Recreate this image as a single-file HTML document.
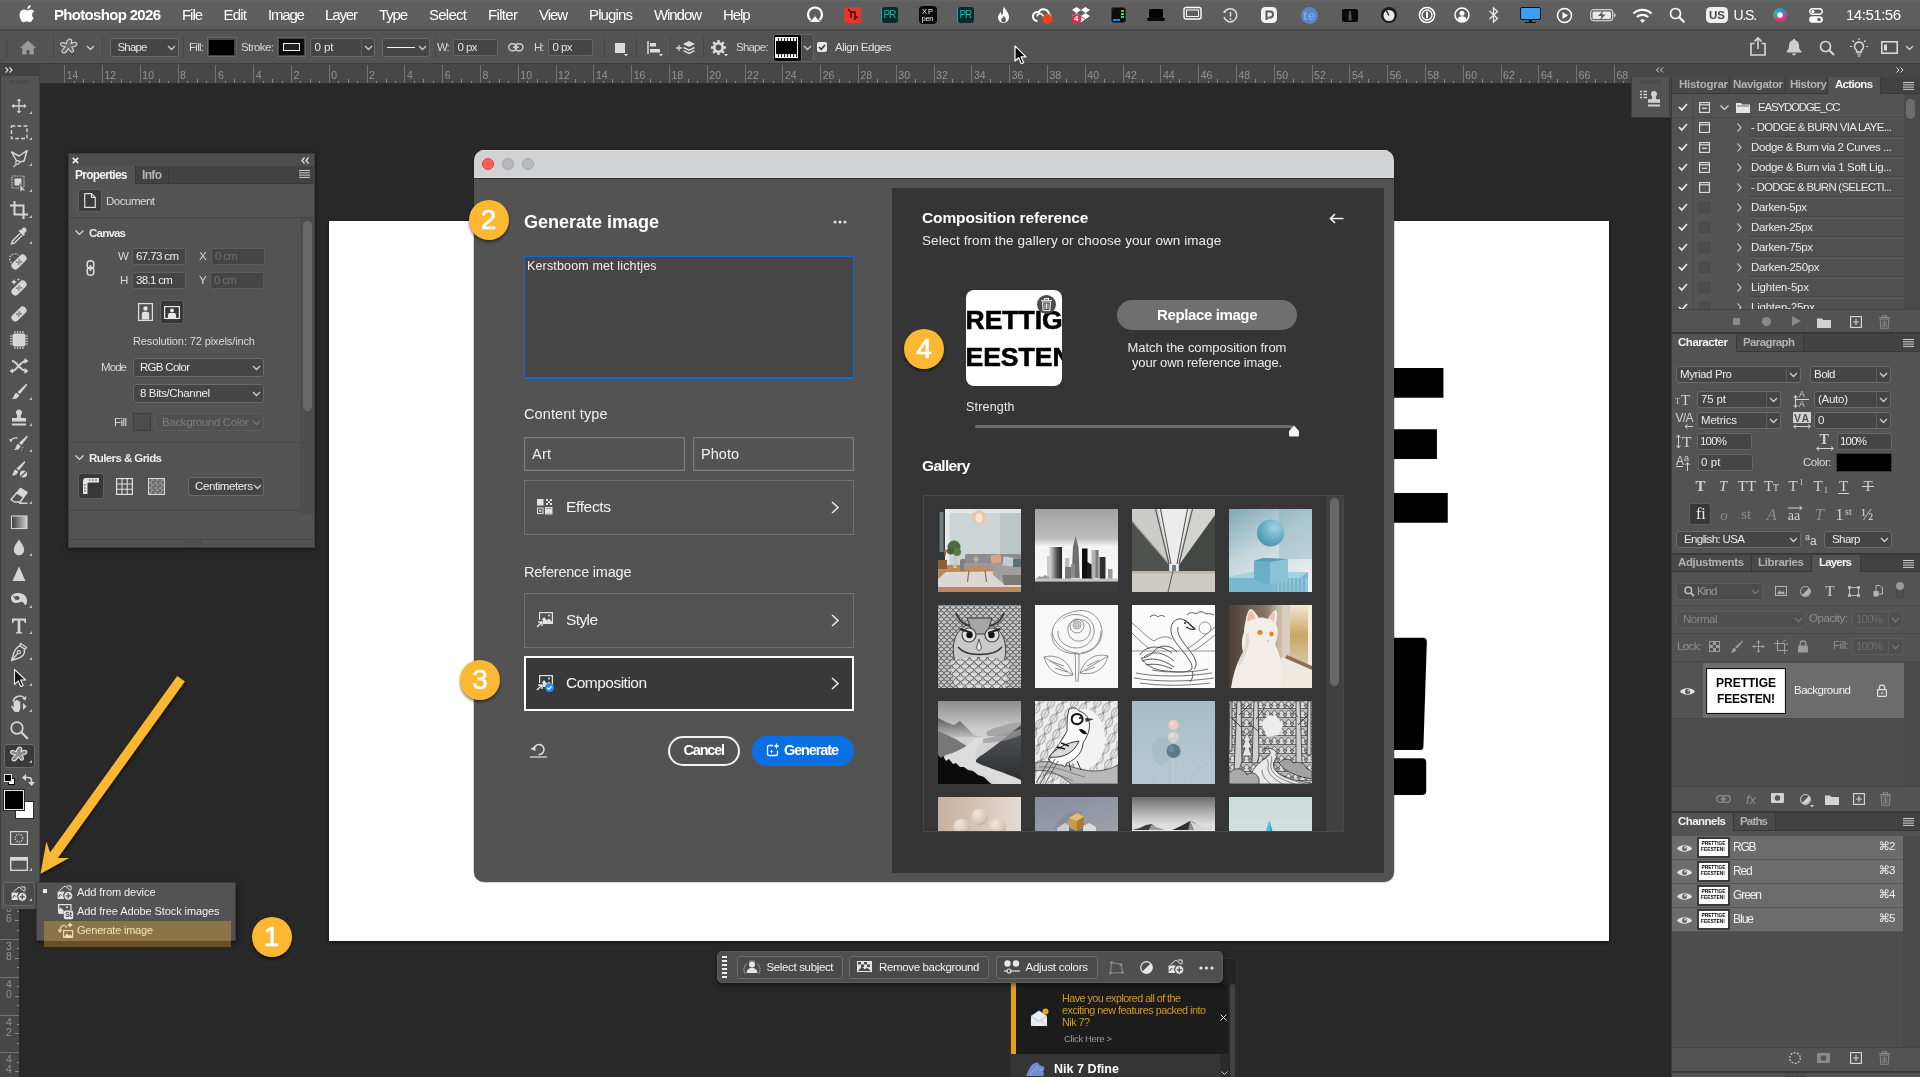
<!DOCTYPE html>
<html lang="en">
<head>
<meta charset="utf-8">
<title>Photoshop 2026 - Generate image</title>
<style>
html,body{margin:0;padding:0}
body{width:1920px;height:1077px;position:relative;overflow:hidden;background:#282828;font-family:"Liberation Sans",sans-serif;color:#ddd;font-size:12px;-webkit-font-smoothing:antialiased}
.a{position:absolute}
.t{position:absolute;white-space:nowrap;line-height:1}
svg{position:absolute;overflow:visible}
.b{font-weight:bold}
/* menu bar */
#menubar{left:0;top:0;width:1920px;height:31px;background:linear-gradient(#686868 0,#5f5f5f 2px,#5e5e5e 24px,#585858 29px,#474747 30px);box-sizing:border-box}
#menubar .t{color:#fff;font-size:15px;top:7px}
/* options bar */
#optbar{left:0;top:31px;width:1920px;height:33px;background:#535353;border-bottom:1px solid #3e3e3e;box-sizing:border-box}
#optbar .t{font-size:11.5px;color:#d6d6d6}
.fld{position:absolute;background:#454545;border:1px solid #666;border-radius:3px;box-sizing:border-box}
.dd{position:absolute;background:#454545;border:1px solid #6a6a6a;border-radius:3px;box-sizing:border-box}
.sep{position:absolute;width:1px;background:#454545}
/* rulers */
#hruler{left:39px;top:64px;width:1592px;height:19px;background:#474747;overflow:hidden}
#vruler{left:0;top:83px;width:19px;height:994px;background:#474747;overflow:hidden}
.rl{position:absolute;color:#939393;font-size:10.500px;line-height:1}
/* panels */
.panel{position:absolute;background:#535353}
.tabbar{position:absolute;background:#424242}
.tab{position:absolute;font-weight:bold;font-size:12px;color:#a8a8a8;line-height:1;white-space:nowrap;transform-origin:0 50%}
.tab.on{color:#f0f0f0}
.tabbg{position:absolute;background:#535353}
.circ{position:absolute;width:40px;height:40px;border-radius:50%;background:#fdb833;color:#fff;font-size:28px;text-align:center;line-height:40px;box-shadow:0 2px 3px rgba(0,0,0,.45)}
</style>
</head>
<body>
<div id="root" style="position:absolute;left:0;top:0;width:1920px;height:1077px;will-change:transform">
<div class="a" id="menubar" style="left:0px;top:0px;width:1920px;height:31px;"><svg style="left:20px;top:5px;" width="15" height="18" viewBox="0 0 15 18"><path d="M10.6 0.2c.1 1-.3 1.9-.9 2.6-.6.7-1.6 1.2-2.5 1.100-.1-.9.400-1.900.9-2.500.6-.700 1.700-1.200 2.500-1.200zM13.700 12.700c-.400.900-.600 1.300-1.100 2.100-.700 1.100-1.700 2.500-3 2.500-1.100 0-1.400-.700-2.900-.700s-1.800.700-2.900.700c-1.300 0-2.200-1.200-2.900-2.400C-.700 12.300-.900 8.600.400 6.700c.900-1.400 2.300-2.200 3.700-2.200 1.400 0 2.300.800 3.400.800 1.100 0 1.800-.800 3.400-.800 1.200 0 2.500.700 3.400 1.800-3 1.600-2.500 5.900-.600 6.400z" fill="#fff"/></svg><span class="t" style="font-size:15px;top:7.3px;letter-spacing:-0.68px;left:54.0px;font-weight:bold;color:#fff;">Photoshop 2026</span><span class="t" style="font-size:15px;top:7.3px;letter-spacing:-1.06px;left:182.0px;color:#fff;">File</span><span class="t" style="font-size:15px;top:7.3px;letter-spacing:-0.78px;left:223.5px;color:#fff;">Edit</span><span class="t" style="font-size:15px;top:7.3px;letter-spacing:-1.20px;left:268.0px;color:#fff;">Image</span><span class="t" style="font-size:15px;top:7.3px;letter-spacing:-1.13px;left:325.0px;color:#fff;">Layer</span><span class="t" style="font-size:15px;top:7.3px;letter-spacing:-1.17px;left:379.0px;color:#fff;">Type</span><span class="t" style="font-size:15px;top:7.3px;letter-spacing:-0.74px;left:429.0px;color:#fff;">Select</span><span class="t" style="font-size:15px;top:7.3px;letter-spacing:-0.67px;left:488.0px;color:#fff;">Filter</span><span class="t" style="font-size:15px;top:7.3px;letter-spacing:-1.08px;left:539.0px;color:#fff;">View</span><span class="t" style="font-size:15px;top:7.3px;letter-spacing:-0.87px;left:589.0px;color:#fff;">Plugins</span><span class="t" style="font-size:15px;top:7.3px;letter-spacing:-1.07px;left:654.0px;color:#fff;">Window</span><span class="t" style="font-size:15px;top:7.3px;letter-spacing:-1.12px;left:723.0px;color:#fff;">Help</span><svg style="left:806px;top:6px;" width="18" height="18" viewBox="0 0 18 18"><circle cx="9" cy="8.5" r="7" fill="none" stroke="#fff" stroke-width="2.200"/><path d="M9 9.500L15 16.500H3z" fill="#fff" stroke="#5e5e5e" stroke-width="1"/></svg><div class="a" style="left:844px;top:7px;width:17px;height:16px;background:#e6352d;border-radius:2px"></div><svg style="left:844px;top:7px;" width="17" height="16" viewBox="0 0 17 16"><path d="M4 2l3 3v6M7 5h4v8M11 9l3 2" stroke="#3a0a08" stroke-width="1.400" fill="none"/></svg><div class="a" style="left:881px;top:7px;width:17px;height:16px;background:#0d2a30;border-radius:3px;border-left:1px solid #1fa7a0;box-sizing:border-box"></div><span class="t" style="font-size:10px;top:10.2px;letter-spacing:-1.20px;left:883.5px;color:#22b4ad;">PR</span><div class="a" style="left:957px;top:7px;width:17px;height:16px;background:#0d2a30;border-radius:3px;border-left:1px solid #1fa7a0;box-sizing:border-box"></div><span class="t" style="font-size:10px;top:10.2px;letter-spacing:-1.20px;left:959.5px;color:#22b4ad;">PR</span><div class="a" style="left:919px;top:6px;width:18px;height:18px;background:#0a0a0a;border-radius:4px"></div><span class="t" style="font-size:7.5px;top:7.9px;letter-spacing:0.99px;left:922.0px;color:#eee;">XP</span><span class="t" style="font-size:7.5px;top:15.4px;letter-spacing:-0.26px;left:921.5px;color:#eee;">pen</span><svg style="left:996px;top:6px;" width="15" height="18" viewBox="0 0 15 18"><path d="M8 0.500c1 3.500 5 5.500 5 10.500 0 3.500-2.500 6-5.500 6S2 14.500 2 11.500c0-2.500 1.500-3.500 2.500-5.500 1 1.500.500 3 1.500 3.500C7.500 7 6.500 3.500 8 .500z" fill="#fff"/><path d="M7.700 10c1.500 1.500 2.300 2.500 2.300 4 0 1.500-1 2.500-2.500 2.500-1.300 0-2.300-1-2.300-2.300 0-1.700 1.800-2.200 2.500-4.200z" fill="#5e5e5e"/></svg><svg style="left:1031px;top:7px;" width="22" height="17" viewBox="0 0 22 17"><path d="M6.500 14a4.500 4.500 0 1 1 1.200-8.800A5.500 5.500 0 0 1 18 7.500 3.500 3.500 0 0 1 17 14" fill="none" stroke="#fff" stroke-width="2"/><path d="M6 9.500a3 3 0 0 1 5.500-1.500l3 3.500" fill="none" stroke="#fff" stroke-width="1.600"/><circle cx="16.500" cy="12" r="5" fill="#f2421d"/></svg><svg style="left:1071px;top:6px;" width="20" height="18" viewBox="0 0 20 18"><path d="M5.500 1l4.500 3-4.500 3L1 4zM14.500 1L19 4l-4.500 3L10 4zM5.500 7l4.500 3-4.500 3L1 10zM14.500 7l4.500 3-4.500 3L10 10zM10 11l4 2.600-4 2.600-4-2.600z" fill="#fff"/><circle cx="5.500" cy="13" r="5" fill="#d9305c"/></svg><span class="t" style="font-size:8px;top:15.3px;left:1074.0px;font-weight:bold;color:#fff;">4</span><div class="a" style="left:1111px;top:7px;width:15px;height:16px;background:#0c0c0c;border-radius:3px;border:1px solid #333;box-sizing:border-box"></div><div class="a" style="left:1121px;top:10px;width:3px;height:2px;background:#3ed05a"></div><div class="a" style="left:1121px;top:13px;width:3px;height:2px;background:#3ed05a"></div><div class="a" style="left:1121px;top:16px;width:3px;height:2px;background:#3ed05a"></div><div class="a" style="left:1113px;top:19px;width:7px;height:2px;background:#2d7df0"></div><div class="a" style="left:1149px;top:9px;width:14px;height:9px;background:#050505;border-radius:1px"></div><div class="a" style="left:1147px;top:18px;width:18px;height:3px;background:#0a0a0a;border-radius:0 0 2px 2px"></div><svg style="left:1183px;top:6px;" width="19" height="15" viewBox="0 0 19 15"><rect x="1" y="1.500" width="17" height="11.500" rx="2" fill="none" stroke="#fff" stroke-width="1.400"/><rect x="3.500" y="4" width="12" height="6.500" fill="none" stroke="#fff" stroke-width="1"/></svg><svg style="left:1221px;top:7px;" width="18" height="17" viewBox="0 0 18 17"><path d="M4 4.500A6.500 6.500 0 1 1 3 10" fill="none" stroke="#ddd" stroke-width="1.500"/><path d="M1.500 5.500l3.500.500-.500-3.500z" fill="#ddd"/><path d="M9.500 5v4.500" stroke="#ddd" stroke-width="1.500"/><circle cx="9.500" cy="12" r=".900" fill="#ddd"/></svg><div class="a" style="left:1261px;top:7px;width:16px;height:16px;background:#f2f2f2;border-radius:4.500px"></div><svg style="left:1261px;top:7px;" width="16" height="16" viewBox="0 0 16 16"><path d="M5.500 13V4.500h3.500a3 3 0 0 1 0 6h-1.500" fill="none" stroke="#5e5e5e" stroke-width="2"/><path d="M5 9.500l2.500 2.500" stroke="#5e5e5e" stroke-width="1.500"/></svg><div class="a" style="left:1301px;top:7px;width:17px;height:17px;background:#5b84c9;border-radius:50%"></div><span class="t" style="font-size:13px;top:8.7px;letter-spacing:0.44px;left:1303.0px;font-weight:bold;color:#7fa6e6;">te</span><div class="a" style="left:1342px;top:9px;width:16px;height:13px;background:#0a0a0a;border-radius:2px"></div><svg style="left:1342px;top:9px;" width="16" height="13" viewBox="0 0 16 13"><path d="M7.300 2h1.400l.800 5.500v4H6.500v-4z" fill="#555"/></svg><svg style="left:1380px;top:6px;" width="18" height="18" viewBox="0 0 18 18"><circle cx="9" cy="9" r="8" fill="#1a1a1a"/><circle cx="9" cy="9.500" r="5.500" fill="#e8e8e8"/><path d="M9 9.500L6.500 5" stroke="#222" stroke-width="1.500"/></svg><svg style="left:1418px;top:6px;" width="18" height="18" viewBox="0 0 18 18"><circle cx="9" cy="9" r="7.600" fill="none" stroke="#fff" stroke-width="1.500"/><circle cx="9" cy="9" r="5" fill="none" stroke="#fff" stroke-width="1.300"/><rect x="8" y="5.500" width="2" height="7" rx="1" fill="#fff"/></svg><svg style="left:1454px;top:7px;" width="16" height="16" viewBox="0 0 16 16"><circle cx="8" cy="8" r="7" fill="none" stroke="#fff" stroke-width="1.500"/><circle cx="8" cy="6.300" r="2.500" fill="#fff"/><path d="M3.300 12.500a5 5 0 0 1 9.400 0A6.500 6.500 0 0 1 3.300 12.500z" fill="#fff"/></svg><svg style="left:1488px;top:6px;" width="11" height="18" viewBox="0 0 11 18"><path d="M1.500 5l8 7.500-4 3.500V2l4 3.500-8 7.500" fill="none" stroke="#e8e8e8" stroke-width="1.300"/></svg><div class="a" style="left:1520px;top:7px;width:21px;height:13px;background:#3c9ff2;border:1.500px solid #111;border-radius:2px;box-sizing:border-box"></div><div class="a" style="left:1529px;top:20px;width:3px;height:2px;background:#111"></div><div class="a" style="left:1525px;top:21.5px;width:11px;height:1.5px;background:#111"></div><svg style="left:1556px;top:7px;" width="17" height="17" viewBox="0 0 17 17"><circle cx="8.500" cy="8.500" r="7" fill="none" stroke="#fff" stroke-width="1.500"/><path d="M6.500 5l5.500 3.500L6.500 12z" fill="#fff"/></svg><svg style="left:1590px;top:9px;" width="27" height="13" viewBox="0 0 27 13"><rect x=".700" y=".700" width="22" height="11" rx="3" fill="none" stroke="#cfcfcf" stroke-width="1.200"/><rect x="2.500" y="2.500" width="18.500" height="7.500" rx="1.500" fill="#e9e9e9"/><path d="M24 4v4.500c1.200-.300 1.600-1.200 1.600-2.200S25.200 4.300 24 4z" fill="#cfcfcf"/><path d="M13 1.500L8 7h3.500l-1.500 4.500L15.500 5.500H12z" fill="#5e5e5e"/></svg><svg style="left:1632px;top:8px;" width="21" height="15" viewBox="0 0 21 15"><path d="M1.500 5.500a13 13 0 0 1 18 0" fill="none" stroke="#fff" stroke-width="2.200"/><path d="M4.800 9a8.500 8.500 0 0 1 11.400 0" fill="none" stroke="#fff" stroke-width="2.200"/><path d="M8 12.200a4 4 0 0 1 5 0L10.500 15z" fill="#fff"/></svg><svg style="left:1669px;top:7px;" width="16" height="16" viewBox="0 0 16 16"><circle cx="6.500" cy="6.500" r="5" fill="none" stroke="#fff" stroke-width="1.700"/><path d="M10.300 10.300l4.500 4.500" stroke="#fff" stroke-width="2" stroke-linecap="round"/></svg><div class="a" style="left:1706px;top:7px;width:22px;height:16px;background:#efefef;border-radius:4.500px"></div><span class="t" style="font-size:11.5px;top:9.7px;letter-spacing:0.02px;left:1709.0px;font-weight:bold;color:#4a4a4a;">US</span><span class="t" style="font-size:14px;top:8.3px;letter-spacing:-1.20px;left:1733.5px;color:#fff;">U.S.</span><div class="a" style="left:1773px;top:8px;width:14px;height:14px;border-radius:50%;background:conic-gradient(from 200deg,#e3306c,#2bb59a,#2a8fd8,#d43a8c,#e3306c)"></div><div class="a" style="left:1777px;top:11.5px;width:6px;height:6px;border-radius:50%;background:radial-gradient(#fff,#cfe8ff 60%,rgba(255,255,255,0))"></div><svg style="left:1809px;top:8px;" width="14" height="15" viewBox="0 0 14 15"><rect x=".800" y=".800" width="12.400" height="5.400" rx="2.700" fill="none" stroke="#fff" stroke-width="1.400"/><circle cx="4" cy="3.500" r="1.600" fill="#fff"/><rect x=".200" y="8.300" width="13.600" height="6.400" rx="3.200" fill="#fff"/><circle cx="10" cy="11.500" r="1.800" fill="#5e5e5e"/></svg><span class="t" style="font-size:15px;top:7.3px;letter-spacing:-0.48px;left:1846.0px;color:#fff;">14:51:56</span></div>
<div class="a" id="optbar"></div><div class="a" style="left:5px;top:38px;width:3px;height:19px;background:repeating-linear-gradient(#474747 0 1px,transparent 1px 2px)"></div><svg style="left:20px;top:40px;" width="16" height="15" viewBox="0 0 16 15"><path d="M8 0.500L0 8h2.200v6.500h4.300V10h3v4.500h4.300V8H16z" fill="#9a9a9a"/></svg><div class="a" style="left:53px;top:36px;width:1px;height:22px;background:#474747"></div><svg style="left:59px;top:38px;" width="20" height="18" viewBox="0 0 20 18"><path d="M9.500 1.500c1.500-1.200 3.500 0 3.200 1.800l-.500 2.200c1.500-.800 3.500-1.800 5-.800 1.500 1 .500 3-1 3.500l-3.300 1.100c1 1.300 2.300 3 1.300 4.300-1.200 1.400-3-.100-3.800-1.300l-1-1.600c-1 1.500-2.400 4.300-4.700 4.300-2 0-2.200-2.200-1-3.500l2.500-2.600C4.200 8.500 1.500 8.300 1.500 6.300c0-2 2.500-2 4-1.400l1.800.700c0-1.600.700-3.100 2.200-4.100z" fill="#6a6a6a" stroke="#d5d5d5" stroke-width="1.100"/></svg><svg style="left:87px;top:46px;" width="7" height="4" viewBox="0 0 7 4"><path d="M0 0l3.500 3.500L7 0" fill="none" stroke="#d0d0d0" stroke-width="1.300"/></svg><div class="a" style="left:102px;top:36px;width:1px;height:22px;background:#474747"></div><div class="dd" style="left:110px;top:38px;width:69px;height:19px;"></div><span class="t" style="font-size:11.5px;top:41.8px;letter-spacing:-0.81px;left:117.5px;color:#e6e6e6;">Shape</span><svg style="left:168px;top:46px;" width="7" height="4" viewBox="0 0 7 4"><path d="M0 0l3.500 3.500L7 0" fill="none" stroke="#d0d0d0" stroke-width="1.300"/></svg><div class="a" style="left:183px;top:36px;width:1px;height:22px;background:#474747"></div><span class="t" style="font-size:11.5px;top:41.8px;letter-spacing:-0.72px;left:189.0px;color:#d6d6d6;">Fill:</span><div class="a" style="left:207px;top:37px;width:30px;height:20px;background:#464646;border:1px solid #666;box-sizing:border-box"></div><div class="a" style="left:209px;top:40px;width:25px;height:15px;background:#000"></div><span class="t" style="font-size:11.5px;top:41.8px;letter-spacing:-0.57px;left:241.0px;color:#d6d6d6;">Stroke:</span><div class="a" style="left:277px;top:37px;width:29px;height:20px;background:#464646;border:1px solid #666;box-sizing:border-box"></div><div class="a" style="left:279px;top:39px;width:25px;height:16px;background:#0a0a0a"></div><div class="a" style="left:283px;top:43px;width:17px;height:8px;border:1.500px solid #f0f0f0;box-sizing:border-box;background:#222"></div><div class="dd" style="left:310px;top:38px;width:65px;height:19px;"></div><div class="a" style="left:361px;top:39px;width:1px;height:17px;background:#5e5e5e"></div><span class="t" style="font-size:11.5px;top:41.8px;letter-spacing:-0.06px;left:314.5px;color:#e6e6e6;">0 pt</span><svg style="left:365px;top:46px;" width="7" height="4" viewBox="0 0 7 4"><path d="M0 0l3.500 3.500L7 0" fill="none" stroke="#d0d0d0" stroke-width="1.300"/></svg><div class="dd" style="left:382px;top:38px;width:48px;height:19px;"></div><div class="a" style="left:387px;top:46.5px;width:28px;height:1.5px;background:#f0f0f0"></div><svg style="left:419px;top:46px;" width="7" height="4" viewBox="0 0 7 4"><path d="M0 0l3.500 3.500L7 0" fill="none" stroke="#d0d0d0" stroke-width="1.300"/></svg><div class="a" style="left:435px;top:36px;width:1px;height:22px;background:#474747"></div><div class="a" style="left:603.5px;top:36px;width:1px;height:22px;background:#474747"></div><div class="a" style="left:636px;top:36px;width:1px;height:22px;background:#474747"></div><div class="a" style="left:669.5px;top:36px;width:1px;height:22px;background:#474747"></div><div class="a" style="left:702.5px;top:36px;width:1px;height:22px;background:#474747"></div><span class="t" style="font-size:11.5px;top:41.8px;letter-spacing:-1.20px;left:437.0px;color:#d6d6d6;">W:</span><div class="fld" style="left:453px;top:39px;width:45px;height:17px;border-radius:2px"></div><span class="t" style="font-size:11.5px;top:41.8px;letter-spacing:-0.58px;left:457.5px;color:#e6e6e6;">0 px</span><svg style="left:508px;top:43px;" width="16" height="9" viewBox="0 0 16 9"><rect x=".700" y=".700" width="8" height="7" rx="3.500" fill="none" stroke="#d0d0d0" stroke-width="1.400"/><rect x="7" y=".700" width="8" height="7" rx="3.500" fill="none" stroke="#d0d0d0" stroke-width="1.400"/><path d="M5 4.200h6" stroke="#d0d0d0" stroke-width="1.400"/></svg><span class="t" style="font-size:11.5px;top:41.8px;letter-spacing:-1.20px;left:534.0px;color:#d6d6d6;">H:</span><div class="fld" style="left:548px;top:39px;width:45px;height:17px;border-radius:2px"></div><span class="t" style="font-size:11.5px;top:41.8px;letter-spacing:-0.58px;left:552.5px;color:#e6e6e6;">0 px</span><div class="a" style="left:615px;top:43px;width:10px;height:10px;background:#dcdcdc"></div><svg style="left:624px;top:54px;" width="4" height="3" viewBox="0 0 4 3"><path d="M0 0h4L2 2.500z" fill="#ddd"/></svg><svg style="left:647px;top:41px;" width="14" height="14" viewBox="0 0 14 14"><path d="M1 0v13" stroke="#ddd" stroke-width="1.500"/><rect x="3" y="2" width="6" height="3.500" fill="#ddd"/><rect x="3" y="8" width="10" height="3.500" fill="#ddd"/></svg><svg style="left:659px;top:54px;" width="4" height="3" viewBox="0 0 4 3"><path d="M0 0h4L2 2.500z" fill="#ddd"/></svg><svg style="left:676px;top:40px;" width="20" height="16" viewBox="0 0 20 16"><path d="M3 5v6M0 8h6" stroke="#ddd" stroke-width="1.300"/><path d="M13 1l6 3-6 3-6-3z" fill="#ddd"/><path d="M7.500 7.500l5.500 2.700 5.500-2.700M7.500 10.700l5.500 2.700 5.500-2.700" fill="none" stroke="#ddd" stroke-width="1.400"/></svg><svg style="left:711px;top:40px;" width="15" height="15" viewBox="0 0 15 15"><circle cx="7.500" cy="7.500" r="4.200" fill="none" stroke="#ddd" stroke-width="2.600"/><g stroke="#ddd" stroke-width="2.400"><path d="M7.500 0v3M7.500 12v3M0 7.500h3M12 7.500h3M2.200 2.200l2 2M10.800 10.800l2 2M2.200 12.800l2-2M10.800 4.200l2-2"/></g></svg><svg style="left:724px;top:54px;" width="4" height="3" viewBox="0 0 4 3"><path d="M0 0h4L2 2.500z" fill="#ddd"/></svg><span class="t" style="font-size:11.5px;top:41.8px;letter-spacing:-0.79px;left:736.0px;color:#d6d6d6;">Shape:</span><div class="a" style="left:772.5px;top:33.5px;width:41px;height:28px;background:#4c4c4c;border:1px solid #666;box-sizing:border-box;border-radius:3px"></div><div class="a" style="left:772.5px;top:33.5px;width:29px;height:28px;background:#000;border:1px solid #6a6a6a;box-sizing:border-box;border-radius:3px"></div><div class="a" style="left:775px;top:37px;width:23px;height:21px;border:1px solid #f4f4f4;box-sizing:border-box"></div><div class="a" style="left:776px;top:38px;width:21px;height:3px;background:repeating-linear-gradient(90deg,#f0f0f0 0 1.500px,#222 1.500px 3px)"></div><div class="a" style="left:776px;top:54px;width:21px;height:3px;background:repeating-linear-gradient(90deg,#f0f0f0 0 1.500px,#222 1.500px 3px)"></div><svg style="left:804px;top:46px;" width="7" height="4" viewBox="0 0 7 4"><path d="M0 0l3.500 3.500L7 0" fill="none" stroke="#d0d0d0" stroke-width="1.300"/></svg><div class="a" style="left:817px;top:42px;width:10px;height:10px;background:#e8e8e8;border-radius:2px"></div><svg style="left:817px;top:42px;" width="10" height="10" viewBox="0 0 10 10"><path d="M2 5l2.300 2.300L8 3" fill="none" stroke="#333" stroke-width="1.600"/></svg><span class="t" style="font-size:11.5px;top:41.8px;letter-spacing:-0.49px;left:835.0px;color:#e0e0e0;">Align Edges</span><svg style="left:1014px;top:45px;" width="14" height="20" viewBox="0 0 14 20"><path d="M1 1v15l3.700-3.300 2.600 6 2.400-1-2.600-5.800H12z" fill="#000" stroke="#fff" stroke-width="1.200" stroke-linejoin="round"/></svg><svg style="left:1750px;top:37px;" width="16" height="19" viewBox="0 0 16 19"><path d="M4.500 6.500H1v11.500h14V6.500h-3.500" fill="none" stroke="#d8d8d8" stroke-width="1.600"/><path d="M8 12V1.500M4.500 4.500L8 1l3.500 3.500" fill="none" stroke="#d8d8d8" stroke-width="1.600"/></svg><svg style="left:1786px;top:39px;" width="16" height="17" viewBox="0 0 16 17"><path d="M8 0c.800 0 1.300.500 1.300 1.200 2.500.700 3.700 2.800 3.700 5.300 0 3.500 1 4.700 2.500 6v1h-15v-1c1.500-1.300 2.500-2.500 2.500-6 0-2.500 1.200-4.600 3.700-5.300C6.700.500 7.200 0 8 0zM6 14.500h4a2 2 0 0 1-4 0z" fill="#cfcfcf"/></svg><svg style="left:1819px;top:40px;" width="16" height="16" viewBox="0 0 16 16"><circle cx="6.500" cy="6.500" r="5" fill="none" stroke="#d8d8d8" stroke-width="1.700"/><path d="M10.300 10.300l4.700 4.700" stroke="#d8d8d8" stroke-width="2"/></svg><svg style="left:1850px;top:38px;" width="18" height="19" viewBox="0 0 18 19"><path d="M9 4a4.500 4.500 0 0 1 2.500 8.200V14h-5v-1.800A4.500 4.500 0 0 1 9 4z" fill="none" stroke="#d8d8d8" stroke-width="1.400"/><path d="M7 16h4M7.500 18h3" stroke="#d8d8d8" stroke-width="1.200"/><path d="M9 0v2M2.500 2.500l1.500 1.500M15.500 2.500L14 4M0 8.500h2M16 8.500h2" stroke="#d8d8d8" stroke-width="1.200"/></svg><svg style="left:1881px;top:41px;" width="17" height="13" viewBox="0 0 17 13"><rect x=".800" y=".800" width="15.400" height="11.400" fill="none" stroke="#d8d8d8" stroke-width="1.600"/><rect x="3" y="3.500" width="3" height="6" fill="#d8d8d8"/></svg><svg style="left:1906px;top:46px;" width="7" height="4" viewBox="0 0 7 4"><path d="M0 0l3.500 3.500L7 0" fill="none" stroke="#d0d0d0" stroke-width="1.300"/></svg>
<div class="a" id="hruler"><svg style="left:0px;top:0px;" width="1592" height="19" viewBox="0 0 1592 19"><path d="M25.5 1V19" stroke="#737373" stroke-width="1"/><path d="M44.5 15V19M35.5 17V19M54.5 17V19" stroke="#8a8a8a" stroke-width="1"/><path d="M63.5 1V19" stroke="#737373" stroke-width="1"/><path d="M82.5 15V19M72.5 17V19M91.5 17V19" stroke="#8a8a8a" stroke-width="1"/><path d="M101.5 1V19" stroke="#737373" stroke-width="1"/><path d="M120.5 15V19M110.5 17V19M129.5 17V19" stroke="#8a8a8a" stroke-width="1"/><path d="M139.5 1V19" stroke="#737373" stroke-width="1"/><path d="M158.5 15V19M148.5 17V19M167.5 17V19" stroke="#8a8a8a" stroke-width="1"/><path d="M176.5 1V19" stroke="#737373" stroke-width="1"/><path d="M195.5 15V19M186.5 17V19M205.5 17V19" stroke="#8a8a8a" stroke-width="1"/><path d="M214.5 1V19" stroke="#737373" stroke-width="1"/><path d="M233.5 15V19M224.5 17V19M243.5 17V19" stroke="#8a8a8a" stroke-width="1"/><path d="M252.5 1V19" stroke="#737373" stroke-width="1"/><path d="M271.5 15V19M261.5 17V19M280.5 17V19" stroke="#8a8a8a" stroke-width="1"/><path d="M290.5 1V19" stroke="#737373" stroke-width="1"/><path d="M309.5 15V19M299.5 17V19M318.5 17V19" stroke="#8a8a8a" stroke-width="1"/><path d="M328.5 1V19" stroke="#737373" stroke-width="1"/><path d="M347.5 15V19M337.5 17V19M356.5 17V19" stroke="#8a8a8a" stroke-width="1"/><path d="M365.5 1V19" stroke="#737373" stroke-width="1"/><path d="M384.5 15V19M375.5 17V19M394.5 17V19" stroke="#8a8a8a" stroke-width="1"/><path d="M403.5 1V19" stroke="#737373" stroke-width="1"/><path d="M422.5 15V19M413.5 17V19M432.5 17V19" stroke="#8a8a8a" stroke-width="1"/><path d="M441.5 1V19" stroke="#737373" stroke-width="1"/><path d="M460.5 15V19M450.5 17V19M469.5 17V19" stroke="#8a8a8a" stroke-width="1"/><path d="M479.5 1V19" stroke="#737373" stroke-width="1"/><path d="M498.5 15V19M488.5 17V19M507.5 17V19" stroke="#8a8a8a" stroke-width="1"/><path d="M517.5 1V19" stroke="#737373" stroke-width="1"/><path d="M536.5 15V19M526.5 17V19M545.5 17V19" stroke="#8a8a8a" stroke-width="1"/><path d="M554.5 1V19" stroke="#737373" stroke-width="1"/><path d="M573.5 15V19M564.5 17V19M583.5 17V19" stroke="#8a8a8a" stroke-width="1"/><path d="M592.5 1V19" stroke="#737373" stroke-width="1"/><path d="M611.5 15V19M602.5 17V19M621.5 17V19" stroke="#8a8a8a" stroke-width="1"/><path d="M630.5 1V19" stroke="#737373" stroke-width="1"/><path d="M649.5 15V19M639.5 17V19M658.5 17V19" stroke="#8a8a8a" stroke-width="1"/><path d="M668.5 1V19" stroke="#737373" stroke-width="1"/><path d="M687.5 15V19M677.5 17V19M696.5 17V19" stroke="#8a8a8a" stroke-width="1"/><path d="M706.5 1V19" stroke="#737373" stroke-width="1"/><path d="M724.5 15V19M715.5 17V19M734.5 17V19" stroke="#8a8a8a" stroke-width="1"/><path d="M743.5 1V19" stroke="#737373" stroke-width="1"/><path d="M762.5 15V19M753.5 17V19M772.5 17V19" stroke="#8a8a8a" stroke-width="1"/><path d="M781.5 1V19" stroke="#737373" stroke-width="1"/><path d="M800.5 15V19M791.5 17V19M810.5 17V19" stroke="#8a8a8a" stroke-width="1"/><path d="M819.5 1V19" stroke="#737373" stroke-width="1"/><path d="M838.5 15V19M828.5 17V19M847.5 17V19" stroke="#8a8a8a" stroke-width="1"/><path d="M857.5 1V19" stroke="#737373" stroke-width="1"/><path d="M876.5 15V19M866.5 17V19M885.5 17V19" stroke="#8a8a8a" stroke-width="1"/><path d="M895.5 1V19" stroke="#737373" stroke-width="1"/><path d="M913.5 15V19M904.5 17V19M923.5 17V19" stroke="#8a8a8a" stroke-width="1"/><path d="M932.5 1V19" stroke="#737373" stroke-width="1"/><path d="M951.5 15V19M942.5 17V19M961.5 17V19" stroke="#8a8a8a" stroke-width="1"/><path d="M970.5 1V19" stroke="#737373" stroke-width="1"/><path d="M989.5 15V19M980.5 17V19M999.5 17V19" stroke="#8a8a8a" stroke-width="1"/><path d="M1008.5 1V19" stroke="#737373" stroke-width="1"/><path d="M1027.5 15V19M1017.5 17V19M1036.5 17V19" stroke="#8a8a8a" stroke-width="1"/><path d="M1046.5 1V19" stroke="#737373" stroke-width="1"/><path d="M1065.5 15V19M1055.5 17V19M1074.5 17V19" stroke="#8a8a8a" stroke-width="1"/><path d="M1084.5 1V19" stroke="#737373" stroke-width="1"/><path d="M1103.5 15V19M1093.5 17V19M1112.5 17V19" stroke="#8a8a8a" stroke-width="1"/><path d="M1121.5 1V19" stroke="#737373" stroke-width="1"/><path d="M1140.5 15V19M1131.5 17V19M1150.5 17V19" stroke="#8a8a8a" stroke-width="1"/><path d="M1159.5 1V19" stroke="#737373" stroke-width="1"/><path d="M1178.5 15V19M1169.5 17V19M1188.5 17V19" stroke="#8a8a8a" stroke-width="1"/><path d="M1197.5 1V19" stroke="#737373" stroke-width="1"/><path d="M1216.5 15V19M1206.5 17V19M1225.5 17V19" stroke="#8a8a8a" stroke-width="1"/><path d="M1235.5 1V19" stroke="#737373" stroke-width="1"/><path d="M1254.5 15V19M1244.5 17V19M1263.5 17V19" stroke="#8a8a8a" stroke-width="1"/><path d="M1273.5 1V19" stroke="#737373" stroke-width="1"/><path d="M1292.5 15V19M1282.5 17V19M1301.5 17V19" stroke="#8a8a8a" stroke-width="1"/><path d="M1310.5 1V19" stroke="#737373" stroke-width="1"/><path d="M1329.5 15V19M1320.5 17V19M1339.5 17V19" stroke="#8a8a8a" stroke-width="1"/><path d="M1348.5 1V19" stroke="#737373" stroke-width="1"/><path d="M1367.5 15V19M1358.5 17V19M1377.5 17V19" stroke="#8a8a8a" stroke-width="1"/><path d="M1386.5 1V19" stroke="#737373" stroke-width="1"/><path d="M1405.5 15V19M1395.5 17V19M1414.5 17V19" stroke="#8a8a8a" stroke-width="1"/><path d="M1424.5 1V19" stroke="#737373" stroke-width="1"/><path d="M1443.5 15V19M1433.5 17V19M1452.5 17V19" stroke="#8a8a8a" stroke-width="1"/><path d="M1462.5 1V19" stroke="#737373" stroke-width="1"/><path d="M1481.5 15V19M1471.5 17V19M1490.5 17V19" stroke="#8a8a8a" stroke-width="1"/><path d="M1499.5 1V19" stroke="#737373" stroke-width="1"/><path d="M1518.5 15V19M1509.5 17V19M1528.5 17V19" stroke="#8a8a8a" stroke-width="1"/><path d="M1537.5 1V19" stroke="#737373" stroke-width="1"/><path d="M1556.5 15V19M1547.5 17V19M1566.5 17V19" stroke="#8a8a8a" stroke-width="1"/><path d="M1575.5 1V19" stroke="#737373" stroke-width="1"/><path d="M1594.5 15V19M1584.5 17V19M1603.5 17V19" stroke="#8a8a8a" stroke-width="1"/><path d="M1613.5 1V19" stroke="#737373" stroke-width="1"/><path d="M1632.5 15V19M1622.5 17V19M1641.5 17V19" stroke="#8a8a8a" stroke-width="1"/></svg><span class="rl" style="left:27.7px;top:6px">14</span><span class="rl" style="left:65.5px;top:6px">12</span><span class="rl" style="left:103.3px;top:6px">10</span><span class="rl" style="left:141.1px;top:6px">8</span><span class="rl" style="left:178.9px;top:6px">6</span><span class="rl" style="left:216.7px;top:6px">4</span><span class="rl" style="left:254.5px;top:6px">2</span><span class="rl" style="left:292.3px;top:6px">0</span><span class="rl" style="left:330.1px;top:6px">2</span><span class="rl" style="left:367.9px;top:6px">4</span><span class="rl" style="left:405.7px;top:6px">6</span><span class="rl" style="left:443.5px;top:6px">8</span><span class="rl" style="left:481.3px;top:6px">10</span><span class="rl" style="left:519.1px;top:6px">12</span><span class="rl" style="left:556.9px;top:6px">14</span><span class="rl" style="left:594.7px;top:6px">16</span><span class="rl" style="left:632.5px;top:6px">18</span><span class="rl" style="left:670.3px;top:6px">20</span><span class="rl" style="left:708.1px;top:6px">22</span><span class="rl" style="left:745.9px;top:6px">24</span><span class="rl" style="left:783.7px;top:6px">26</span><span class="rl" style="left:821.5px;top:6px">28</span><span class="rl" style="left:859.3px;top:6px">30</span><span class="rl" style="left:897.1px;top:6px">32</span><span class="rl" style="left:934.9px;top:6px">34</span><span class="rl" style="left:972.7px;top:6px">36</span><span class="rl" style="left:1010.5px;top:6px">38</span><span class="rl" style="left:1048.3px;top:6px">40</span><span class="rl" style="left:1086.1px;top:6px">42</span><span class="rl" style="left:1123.9px;top:6px">44</span><span class="rl" style="left:1161.7px;top:6px">46</span><span class="rl" style="left:1199.5px;top:6px">48</span><span class="rl" style="left:1237.3px;top:6px">50</span><span class="rl" style="left:1275.1px;top:6px">52</span><span class="rl" style="left:1312.9px;top:6px">54</span><span class="rl" style="left:1350.7px;top:6px">56</span><span class="rl" style="left:1388.5px;top:6px">58</span><span class="rl" style="left:1426.3px;top:6px">60</span><span class="rl" style="left:1464.1px;top:6px">62</span><span class="rl" style="left:1501.9px;top:6px">64</span><span class="rl" style="left:1539.7px;top:6px">66</span><span class="rl" style="left:1577.5px;top:6px">68</span><span class="rl" style="left:1615.3px;top:6px">70</span></div><div class="a" id="vruler"><svg style="left:0px;top:0px;" width="19" height="994" viewBox="0 0 19 994"><path d="M0 -11.5H19" stroke="#737373" stroke-width="1"/><path d="M15 6.5H19M17 -2.5H19M17 15.5H19" stroke="#8a8a8a" stroke-width="1"/><path d="M0 24.5H19" stroke="#737373" stroke-width="1"/><path d="M15 43.5H19M17 34.5H19M17 53.5H19" stroke="#8a8a8a" stroke-width="1"/><path d="M0 62.5H19" stroke="#737373" stroke-width="1"/><path d="M15 81.5H19M17 72.5H19M17 91.5H19" stroke="#8a8a8a" stroke-width="1"/><path d="M0 100.5H19" stroke="#737373" stroke-width="1"/><path d="M15 119.5H19M17 109.5H19M17 128.5H19" stroke="#8a8a8a" stroke-width="1"/><path d="M0 138.5H19" stroke="#737373" stroke-width="1"/><path d="M15 157.5H19M17 147.5H19M17 166.5H19" stroke="#8a8a8a" stroke-width="1"/><path d="M0 176.5H19" stroke="#737373" stroke-width="1"/><path d="M15 195.5H19M17 185.5H19M17 204.5H19" stroke="#8a8a8a" stroke-width="1"/><path d="M0 213.5H19" stroke="#737373" stroke-width="1"/><path d="M15 232.5H19M17 223.5H19M17 242.5H19" stroke="#8a8a8a" stroke-width="1"/><path d="M0 251.5H19" stroke="#737373" stroke-width="1"/><path d="M15 270.5H19M17 261.5H19M17 280.5H19" stroke="#8a8a8a" stroke-width="1"/><path d="M0 289.5H19" stroke="#737373" stroke-width="1"/><path d="M15 308.5H19M17 298.5H19M17 317.5H19" stroke="#8a8a8a" stroke-width="1"/><path d="M0 327.5H19" stroke="#737373" stroke-width="1"/><path d="M15 346.5H19M17 336.5H19M17 355.5H19" stroke="#8a8a8a" stroke-width="1"/><path d="M0 365.5H19" stroke="#737373" stroke-width="1"/><path d="M15 384.5H19M17 374.5H19M17 393.5H19" stroke="#8a8a8a" stroke-width="1"/><path d="M0 402.5H19" stroke="#737373" stroke-width="1"/><path d="M15 421.5H19M17 412.5H19M17 431.5H19" stroke="#8a8a8a" stroke-width="1"/><path d="M0 440.5H19" stroke="#737373" stroke-width="1"/><path d="M15 459.5H19M17 450.5H19M17 469.5H19" stroke="#8a8a8a" stroke-width="1"/><path d="M0 478.5H19" stroke="#737373" stroke-width="1"/><path d="M15 497.5H19M17 487.5H19M17 506.5H19" stroke="#8a8a8a" stroke-width="1"/><path d="M0 516.5H19" stroke="#737373" stroke-width="1"/><path d="M15 535.5H19M17 525.5H19M17 544.5H19" stroke="#8a8a8a" stroke-width="1"/><path d="M0 554.5H19" stroke="#737373" stroke-width="1"/><path d="M15 572.5H19M17 563.5H19M17 582.5H19" stroke="#8a8a8a" stroke-width="1"/><path d="M0 591.5H19" stroke="#737373" stroke-width="1"/><path d="M15 610.5H19M17 601.5H19M17 620.5H19" stroke="#8a8a8a" stroke-width="1"/><path d="M0 629.5H19" stroke="#737373" stroke-width="1"/><path d="M15 648.5H19M17 639.5H19M17 658.5H19" stroke="#8a8a8a" stroke-width="1"/><path d="M0 667.5H19" stroke="#737373" stroke-width="1"/><path d="M15 686.5H19M17 676.5H19M17 695.5H19" stroke="#8a8a8a" stroke-width="1"/><path d="M0 705.5H19" stroke="#737373" stroke-width="1"/><path d="M15 724.5H19M17 714.5H19M17 733.5H19" stroke="#8a8a8a" stroke-width="1"/><path d="M0 743.5H19" stroke="#737373" stroke-width="1"/><path d="M15 761.5H19M17 752.5H19M17 771.5H19" stroke="#8a8a8a" stroke-width="1"/><path d="M0 780.5H19" stroke="#737373" stroke-width="1"/><path d="M15 799.5H19M17 790.5H19M17 809.5H19" stroke="#8a8a8a" stroke-width="1"/><path d="M0 818.5H19" stroke="#737373" stroke-width="1"/><path d="M15 837.5H19M17 828.5H19M17 847.5H19" stroke="#8a8a8a" stroke-width="1"/><path d="M0 856.5H19" stroke="#737373" stroke-width="1"/><path d="M15 875.5H19M17 865.5H19M17 884.5H19" stroke="#8a8a8a" stroke-width="1"/><path d="M0 894.5H19" stroke="#737373" stroke-width="1"/><path d="M15 913.5H19M17 903.5H19M17 922.5H19" stroke="#8a8a8a" stroke-width="1"/><path d="M0 932.5H19" stroke="#737373" stroke-width="1"/><path d="M15 950.5H19M17 941.5H19M17 960.5H19" stroke="#8a8a8a" stroke-width="1"/><path d="M0 969.5H19" stroke="#737373" stroke-width="1"/><path d="M15 988.5H19M17 979.5H19M17 998.5H19" stroke="#8a8a8a" stroke-width="1"/><path d="M0 1007.5H19" stroke="#737373" stroke-width="1"/><path d="M15 1026.5H19M17 1017.5H19M17 1036.5H19" stroke="#8a8a8a" stroke-width="1"/></svg><span class="rl" style="left:6px;top:-11.4px">8</span><span class="rl" style="left:6px;top:26.4px">6</span><span class="rl" style="left:6px;top:64.2px">4</span><span class="rl" style="left:6px;top:102.0px">2</span><span class="rl" style="left:6px;top:139.8px">0</span><span class="rl" style="left:6px;top:177.6px">2</span><span class="rl" style="left:6px;top:215.4px">4</span><span class="rl" style="left:6px;top:253.2px">6</span><span class="rl" style="left:6px;top:291.0px">8</span><span class="rl" style="left:6px;top:328.8px">1</span><span class="rl" style="left:6px;top:338.8px">0</span><span class="rl" style="left:6px;top:366.6px">1</span><span class="rl" style="left:6px;top:376.6px">2</span><span class="rl" style="left:6px;top:404.4px">1</span><span class="rl" style="left:6px;top:414.4px">4</span><span class="rl" style="left:6px;top:442.2px">1</span><span class="rl" style="left:6px;top:452.2px">6</span><span class="rl" style="left:6px;top:480.0px">1</span><span class="rl" style="left:6px;top:490.0px">8</span><span class="rl" style="left:6px;top:517.8px">2</span><span class="rl" style="left:6px;top:527.8px">0</span><span class="rl" style="left:6px;top:555.6px">2</span><span class="rl" style="left:6px;top:565.6px">2</span><span class="rl" style="left:6px;top:593.4px">2</span><span class="rl" style="left:6px;top:603.4px">4</span><span class="rl" style="left:6px;top:631.2px">2</span><span class="rl" style="left:6px;top:641.2px">6</span><span class="rl" style="left:6px;top:669.0px">2</span><span class="rl" style="left:6px;top:679.0px">8</span><span class="rl" style="left:6px;top:706.8px">3</span><span class="rl" style="left:6px;top:716.8px">0</span><span class="rl" style="left:6px;top:744.6px">3</span><span class="rl" style="left:6px;top:754.6px">2</span><span class="rl" style="left:6px;top:782.4px">3</span><span class="rl" style="left:6px;top:792.4px">4</span><span class="rl" style="left:6px;top:820.2px">3</span><span class="rl" style="left:6px;top:830.2px">6</span><span class="rl" style="left:6px;top:858.0px">3</span><span class="rl" style="left:6px;top:868.0px">8</span><span class="rl" style="left:6px;top:895.8px">4</span><span class="rl" style="left:6px;top:905.8px">0</span><span class="rl" style="left:6px;top:933.6px">4</span><span class="rl" style="left:6px;top:943.6px">2</span><span class="rl" style="left:6px;top:971.4px">4</span><span class="rl" style="left:6px;top:981.4px">4</span><span class="rl" style="left:6px;top:1009.2px">4</span><span class="rl" style="left:6px;top:1019.2px">6</span></div><div class="a" style="left:329px;top:221px;width:1280px;height:720px;background:#fff;box-shadow:0 1px 3px rgba(0,0,0,.6)"></div><svg style="left:1380px;top:221px;overflow:hidden" width="229" height="720" viewBox="1380 221 229 720"><text id="bigE" x="1453.500" y="520" text-anchor="end" font-family="Liberation Sans, sans-serif" font-weight="bold" font-size="217" fill="#000" stroke="#000" stroke-width="5.500" stroke-linejoin="miter">PRETTIGE</text><text id="bigX" x="1443.500" y="790.500" text-anchor="end" font-family="Liberation Sans, sans-serif" font-weight="bold" font-size="217" fill="#000" stroke="#000" stroke-width="8" stroke-linejoin="round">FEESTEN!</text></svg>
<div class="a" style="left:0px;top:64px;width:40px;height:845px;background:#535353;border-right:1px solid #424242;border-left:1px solid #3c3c3c;box-sizing:border-box"></div><div class="a" style="left:0px;top:64px;width:40px;height:12px;background:#424242"></div><svg style="left:5px;top:67px;" width="8" height="6" viewBox="0 0 8 6"><path d="M.500.500L3 3 .500 5.500M4.500.500L7 3 4.500 5.500" fill="none" stroke="#e0e0e0" stroke-width="1.100"/></svg><div class="a" style="left:10px;top:80px;width:19px;height:4px;background:repeating-linear-gradient(90deg,#454545 0 1px,transparent 1px 2px)"></div><svg style="left:9px;top:96px;" width="20" height="20" viewBox="0 0 20 20"><g transform="translate(10 10) scale(.800) translate(-10 -10)"><path d="M10 2v16M2 10h16" stroke="#d6d6d6" stroke-width="1.600"/><path d="M10 .500l2.800 3.400H7.200zM10 19.500l2.800-3.400H7.200zM.500 10l3.400-2.800v5.600zM19.500 10l-3.400-2.800v5.600z" fill="#d6d6d6"/></g></svg><svg style="left:29px;top:111px;" width="3" height="3" viewBox="0 0 3 3"><path d="M3 0V3H0z" fill="#bdbdbd"/></svg><svg style="left:9px;top:122px;" width="20" height="20" viewBox="0 0 20 20"><rect x="2.500" y="4" width="15.500" height="12.500" fill="none" stroke="#d6d6d6" stroke-width="1.400" stroke-dasharray="3.800 2.200"/></svg><svg style="left:29px;top:137px;" width="3" height="3" viewBox="0 0 3 3"><path d="M3 0V3H0z" fill="#bdbdbd"/></svg><svg style="left:9px;top:148px;" width="20" height="20" viewBox="0 0 20 20"><path d="M2.500 4l7.500 4 8-5.500-3 10.500-6.500 1.500z" fill="none" stroke="#d6d6d6" stroke-width="1.500" stroke-linejoin="round"/><circle cx="8.500" cy="14.500" r="1.800" fill="#535353" stroke="#d6d6d6" stroke-width="1.200"/><path d="M7.500 16l-3 3" stroke="#d6d6d6" stroke-width="1.300"/></svg><svg style="left:29px;top:163px;" width="3" height="3" viewBox="0 0 3 3"><path d="M3 0V3H0z" fill="#bdbdbd"/></svg><svg style="left:9px;top:174px;" width="20" height="20" viewBox="0 0 20 20"><rect x="3" y="2" width="12" height="12" fill="none" stroke="#d6d6d6" stroke-width="1.200" stroke-dasharray="1.200 1.200"/><rect x="5.500" y="4.500" width="7" height="7" fill="#d6d6d6"/><path d="M11 9.500v9l2.300-2.200 3.700 1.500z" fill="#d6d6d6" stroke="#535353" stroke-width=".800"/></svg><svg style="left:29px;top:189px;" width="3" height="3" viewBox="0 0 3 3"><path d="M3 0V3H0z" fill="#bdbdbd"/></svg><svg style="left:9px;top:200px;" width="20" height="20" viewBox="0 0 20 20"><path d="M5.500 1v13.500H19M1 5.500h13.500V19" fill="none" stroke="#d6d6d6" stroke-width="2"/></svg><svg style="left:29px;top:215px;" width="3" height="3" viewBox="0 0 3 3"><path d="M3 0V3H0z" fill="#bdbdbd"/></svg><svg style="left:9px;top:226px;" width="20" height="20" viewBox="0 0 20 20"><path d="M13 2.500c1-1.500 3-1.500 4 0s.500 3-.500 3.700l-1.500 1.300 1 1-1.500 1.500-5-5L11 3.500l1 1z" fill="#d6d6d6"/><path d="M11 7.500l-7.500 7.500-1 3 3-1 7.500-7.500" fill="none" stroke="#d6d6d6" stroke-width="1.400"/></svg><svg style="left:29px;top:241px;" width="3" height="3" viewBox="0 0 3 3"><path d="M3 0V3H0z" fill="#bdbdbd"/></svg><svg style="left:9px;top:252px;" width="20" height="20" viewBox="0 0 20 20"><g transform="rotate(-45 10 10)"><rect x="1" y="6.200" width="18" height="7.600" rx="3.800" fill="#d6d6d6"/><g fill="#535353"><circle cx="8.500" cy="8.700" r=".800"/><circle cx="11.500" cy="8.700" r=".800"/><circle cx="8.500" cy="11.300" r=".800"/><circle cx="11.500" cy="11.300" r=".800"/><circle cx="10" cy="10" r=".800"/></g></g><path d="M2.500 11A4.500 4.500 0 0 1 9.500 3" fill="none" stroke="#d6d6d6" stroke-width="1.100" stroke-dasharray="1.800 1.300"/></svg><svg style="left:9px;top:278px;" width="20" height="20" viewBox="0 0 20 20"><g transform="rotate(-45 10 10)"><rect x="1" y="6.200" width="18" height="7.600" rx="3.800" fill="#d6d6d6"/><g fill="#535353"><circle cx="8.500" cy="8.700" r=".800"/><circle cx="11.500" cy="8.700" r=".800"/><circle cx="8.500" cy="11.300" r=".800"/><circle cx="11.500" cy="11.300" r=".800"/><circle cx="10" cy="10" r=".800"/></g></g><path d="M5 1l.900 2.100L8 4l-2.100.900L5 7l-.900-2.100L2 4l2.100-.900z" fill="#d6d6d6"/><path d="M9.500 0l.500 1 1 .500-1 .500-.500 1-.500-1-1-.500 1-.500z" fill="#d6d6d6"/></svg><svg style="left:9px;top:304px;" width="20" height="20" viewBox="0 0 20 20"><g transform="rotate(-45 10 10)"><rect x="1" y="6.200" width="18" height="7.600" rx="3.800" fill="#d6d6d6"/><g fill="#535353"><circle cx="8.500" cy="8.700" r=".800"/><circle cx="11.500" cy="8.700" r=".800"/><circle cx="8.500" cy="11.300" r=".800"/><circle cx="11.500" cy="11.300" r=".800"/><circle cx="10" cy="10" r=".800"/></g></g></svg><svg style="left:9px;top:330px;" width="20" height="20" viewBox="0 0 20 20"><rect x="3.500" y="3.500" width="13" height="13" rx="2" fill="#d6d6d6"/><path d="M6 1v18M8.700 1v18M11.300 1v18M14 1v18M1 6h18M1 8.700h18M1 11.300h18M1 14h18" stroke="#d6d6d6" stroke-width="1.100" stroke-dasharray="2 14 2 100"/></svg><svg style="left:9px;top:356px;" width="20" height="20" viewBox="0 0 20 20"><path d="M3 5c5 0 8 10 14 10M3 15c5 0 8-10 14-10" fill="none" stroke="#d6d6d6" stroke-width="2"/><path d="M19.500 5l-4-3v6zM19.500 15l-4-3v6zM.500 15l3.500-2.500v5z" fill="#d6d6d6"/></svg><svg style="left:9px;top:382px;" width="20" height="20" viewBox="0 0 20 20"><path d="M17.500 1.500c.800.500.800 1.300.300 2L11 12l-2.500-2z" fill="#d6d6d6"/><path d="M7.700 11l2.500 2c-.500 2.500-3 4.500-7.700 4 2-1 2-2.500 2.700-4 .500-1.200 1.500-1.800 2.500-2z" fill="#d6d6d6"/></svg><svg style="left:29px;top:397px;" width="3" height="3" viewBox="0 0 3 3"><path d="M3 0V3H0z" fill="#bdbdbd"/></svg><svg style="left:9px;top:408px;" width="20" height="20" viewBox="0 0 20 20"><path d="M10 1.500a3 3 0 0 1 2.300 5c-.800 1-.800 2.500.200 3.500H17v3.500H3V10h4.500c1-1 1-2.500.200-3.500A3 3 0 0 1 10 1.500z" fill="#d6d6d6"/><rect x="3" y="15.500" width="14" height="2" fill="#d6d6d6"/></svg><svg style="left:29px;top:423px;" width="3" height="3" viewBox="0 0 3 3"><path d="M3 0V3H0z" fill="#bdbdbd"/></svg><svg style="left:9px;top:434px;" width="20" height="20" viewBox="0 0 20 20"><path d="M18 1.500c.800.500.800 1.300.300 2L12.500 11 10 9z" fill="#d6d6d6"/><path d="M9.200 10l2.500 2c-.500 2.500-3 4.500-7 4 2-1 2-2.500 2.500-3.800.400-1.200 1-1.800 2-2.200z" fill="#d6d6d6"/><path d="M1.500 7.500A6 6 0 0 1 8.500 4" fill="none" stroke="#d6d6d6" stroke-width="1.300"/><path d="M0 5l3 .500L2 8.500z" fill="#d6d6d6"/><path d="M14 13l-2 5" stroke="#d6d6d6" stroke-width="1" stroke-dasharray="1 1.500"/></svg><svg style="left:29px;top:449px;" width="3" height="3" viewBox="0 0 3 3"><path d="M3 0V3H0z" fill="#bdbdbd"/></svg><svg style="left:9px;top:460px;" width="20" height="20" viewBox="0 0 20 20"><path d="M15.500 1c.800.500.800 1.300.300 2L10 10.500 7.500 8.500z" fill="#d6d6d6"/><path d="M6.700 9.500l2.500 2c-.500 2.500-3 4.500-7 4 2-1 2-2.500 2.500-3.800.400-1.200 1-1.800 2-2.200z" fill="#d6d6d6"/><circle cx="14.500" cy="14" r="3.600" fill="#d6d6d6"/><path d="M12 16.500l5-5" stroke="#535353" stroke-width="1.200"/></svg><svg style="left:9px;top:486px;" width="20" height="20" viewBox="0 0 20 20"><path d="M11.500 2.500l6.500 4-7 9.500H5.500L2 13.500z" fill="none" stroke="#d6d6d6" stroke-width="1.500" stroke-linejoin="round"/><path d="M11.500 2.500l6.500 4-3.800 5.200-6.500-4z" fill="#d6d6d6"/><path d="M10 17.200h8.500" stroke="#d6d6d6" stroke-width="1.500"/></svg><svg style="left:29px;top:501px;" width="3" height="3" viewBox="0 0 3 3"><path d="M3 0V3H0z" fill="#bdbdbd"/></svg><svg style="left:9px;top:512px;" width="20" height="20" viewBox="0 0 20 20"><defs><linearGradient id="tg"><stop offset="0" stop-color="#3a3a3a"/><stop offset="1" stop-color="#cfcfcf"/></linearGradient></defs><rect x="2.500" y="4" width="15.500" height="12.500" fill="url(#tg)" stroke="#d6d6d6" stroke-width="1.100"/></svg><svg style="left:9px;top:538px;" width="20" height="20" viewBox="0 0 20 20"><path d="M10 1.500c2 3.500 5.200 6.500 5.200 10.500a5.200 5.200 0 0 1-10.400 0C4.800 8 8 5 10 1.500z" fill="#d6d6d6"/></svg><svg style="left:29px;top:553px;" width="3" height="3" viewBox="0 0 3 3"><path d="M3 0V3H0z" fill="#bdbdbd"/></svg><svg style="left:9px;top:564px;" width="20" height="20" viewBox="0 0 20 20"><path d="M10 2.500L16.500 17h-13z" fill="#d6d6d6"/></svg><svg style="left:9px;top:590px;" width="20" height="20" viewBox="0 0 20 20"><path d="M2 8c0-3 3-5 7-5 4.500 0 8.500 2.500 9 7 .200 2.500-.500 5-1.500 5-1.500 0-1-2-3-3-1.500-.700-3 1-6 1C4 13 2 11 2 8z" fill="#d6d6d6"/><ellipse cx="8" cy="8" rx="2.600" ry="2" fill="#535353"/><path d="M4 6l2 1.500" stroke="#535353" stroke-width="1"/></svg><svg style="left:29px;top:605px;" width="3" height="3" viewBox="0 0 3 3"><path d="M3 0V3H0z" fill="#bdbdbd"/></svg><svg style="left:9px;top:616px;" width="20" height="20" viewBox="0 0 20 20"><path d="M3 2.500h14V7h-1.300c-.200-1.800-.800-2.500-2.200-2.500H11.300v10.500c0 1 .500 1.300 1.800 1.400V17.500H6.900v-1.100c1.300-.100 1.800-.400 1.800-1.400V4.500H6.500C5.100 4.500 4.500 5.200 4.300 7H3z" fill="#d6d6d6"/></svg><svg style="left:29px;top:631px;" width="3" height="3" viewBox="0 0 3 3"><path d="M3 0V3H0z" fill="#bdbdbd"/></svg><svg style="left:9px;top:642px;" width="20" height="20" viewBox="0 0 20 20"><path d="M11.500 1.500l6 4-2 2c.500 4-2 8-8.500 9.500l-4.500 1.500L4 14C5 8 8.500 4.500 11 4z" fill="none" stroke="#d6d6d6" stroke-width="1.400" stroke-linejoin="round"/><path d="M3 18l6-7" stroke="#d6d6d6" stroke-width="1.200"/><circle cx="9.800" cy="10.200" r="1.600" fill="none" stroke="#d6d6d6" stroke-width="1.100"/><path d="M10.500 3.500l5.500 4" stroke="#d6d6d6" stroke-width="1.200"/></svg><svg style="left:29px;top:657px;" width="3" height="3" viewBox="0 0 3 3"><path d="M3 0V3H0z" fill="#bdbdbd"/></svg><svg style="left:9px;top:668px;" width="20" height="20" viewBox="0 0 20 20"><path d="M5.500 1.500v15l3.700-3.600 2.500 5.600 2.400-1-2.500-5.500h5z" fill="#111" stroke="#eee" stroke-width="1.100" stroke-linejoin="round"/></svg><svg style="left:29px;top:683px;" width="3" height="3" viewBox="0 0 3 3"><path d="M3 0V3H0z" fill="#bdbdbd"/></svg><svg style="left:9px;top:694px;" width="20" height="20" viewBox="0 0 20 20"><path d="M4 7.500A7 7 0 0 1 15 3.500" fill="none" stroke="#d6d6d6" stroke-width="1.400"/><path d="M17.500 2l-1 4.500-3.500-2z" fill="#d6d6d6"/><path d="M6 18c-2-2-3.500-4.500-4-6 .800-.800 1.800 0 2.700 1.500V8c0-1.200 1.600-1.200 1.600 0V6.700c0-1.200 1.700-1.200 1.700 0V7c0-1.200 1.700-1.200 1.700 0v1c0-1.100 1.600-1.100 1.600 0v5.500c0 2-1 3.500-1.500 4.500z" fill="#d6d6d6"/><path d="M14 9l3.500 3.500L14 16z" fill="#d6d6d6"/></svg><svg style="left:29px;top:709px;" width="3" height="3" viewBox="0 0 3 3"><path d="M3 0V3H0z" fill="#bdbdbd"/></svg><svg style="left:9px;top:720px;" width="20" height="20" viewBox="0 0 20 20"><circle cx="8" cy="8" r="5.800" fill="none" stroke="#d6d6d6" stroke-width="1.700"/><path d="M12.300 12.300l6 6" stroke="#d6d6d6" stroke-width="2.200" stroke-linecap="round"/></svg><div class="a" style="left:4px;top:744px;width:31px;height:24px;background:#3a3a3a;border:1px solid #6a6a6a;border-radius:3px;box-sizing:border-box"></div><svg style="left:9px;top:746px;" width="20" height="18" viewBox="0 0 20 18"><path d="M9.500 1.500c1.500-1.200 3.500 0 3.200 1.800l-.500 2.200c1.500-.800 3.500-1.800 5-.800 1.500 1 .500 3-1 3.500l-3.300 1.100c1 1.300 2.300 3 1.300 4.300-1.200 1.400-3-.100-3.800-1.300l-1-1.600c-1 1.500-2.400 4.300-4.700 4.300-2 0-2.200-2.200-1-3.500l2.500-2.600C4.200 8.500 1.500 8.300 1.500 6.300c0-2 2.500-2 4-1.400l1.800.700c0-1.600.700-3.100 2.200-4.100z" fill="#8a8a8a" stroke="#e0e0e0" stroke-width="1.100"/></svg><svg style="left:29px;top:760px;" width="3" height="3" viewBox="0 0 3 3"><path d="M3 0V3H0z" fill="#bdbdbd"/></svg><div class="a" style="left:3.5px;top:774px;width:8px;height:8px;background:#000;border:1px solid #ddd;box-sizing:border-box"></div><div class="a" style="left:8px;top:778px;width:7px;height:7px;background:#fff;border:1px solid #000;box-sizing:border-box"></div><div class="a" style="left:3.5px;top:774px;width:8px;height:8px;background:#000;border:1px solid #ddd;box-sizing:border-box"></div><svg style="left:22px;top:773px;" width="12" height="13" viewBox="0 0 12 13"><path d="M3 4.500h3.500a3 3 0 0 1 3 3V11" fill="none" stroke="#d6d6d6" stroke-width="1.600"/><path d="M0 4.500L4 1v7zM9.500 13L6 9h7z" fill="#d6d6d6"/></svg><div class="a" style="left:15px;top:801px;width:19px;height:18px;background:#fff;border:1px solid #2a2a2a;box-sizing:border-box"></div><div class="a" style="left:4px;top:790px;width:20px;height:20px;background:#000;border:1px solid #e8e8e8;box-sizing:border-box;outline:1px solid #2a2a2a"></div><svg style="left:10px;top:831px;" width="18" height="14" viewBox="0 0 18 14"><rect x=".600" y=".600" width="16.800" height="12.800" fill="none" stroke="#d6d6d6" stroke-width="1.200"/><circle cx="9" cy="7" r="3.800" fill="none" stroke="#d6d6d6" stroke-width="1.200" stroke-dasharray="1.200 1.200"/></svg><svg style="left:10px;top:857px;" width="18" height="14" viewBox="0 0 18 14"><rect x=".700" y=".700" width="16.600" height="12.600" fill="none" stroke="#d6d6d6" stroke-width="1.400"/><rect x=".700" y=".700" width="16.600" height="3" fill="#d6d6d6"/></svg><svg style="left:29px;top:868px;" width="3" height="3" viewBox="0 0 3 3"><path d="M3 0V3H0z" fill="#bdbdbd"/></svg><div class="a" style="left:3px;top:882px;width:32px;height:24px;background:#4a4a4a;border:1px solid #6a6a6a;border-radius:3px;box-sizing:border-box"></div><svg style="left:11px;top:886px;" width="17" height="16" viewBox="0 0 17 16"><path d="M2.500 5.500L8 1l5.500 4.500M10 1h4v4" fill="none" stroke="#e0e0e0" stroke-width="1"/><path d="M.600 14V6.500h7l-1.500 3 1 4.500z" fill="#e0e0e0"/><path d="M1.500 12l2-2.800 1.500 1.500" fill="none" stroke="#4a4a4a" stroke-width="1"/><circle cx="11.300" cy="10.800" r="4.400" fill="#e0e0e0" stroke="#4a4a4a" stroke-width=".800"/><path d="M11.300 8.300v5M8.800 10.800h5" stroke="#4a4a4a" stroke-width="1.300"/></svg><svg style="left:29px;top:898px;" width="3" height="3" viewBox="0 0 3 3"><path d="M3 0V3H0z" fill="#bdbdbd"/></svg>
<div class="a" style="left:68px;top:153px;width:247px;height:395px;background:#535353;box-shadow:0 1px 4px rgba(0,0,0,.55);border:1px solid #3e3e3e;box-sizing:border-box"></div><div class="a" style="left:69px;top:154px;width:245px;height:12px;background:#4d4d4d"></div><svg style="left:72px;top:157px;" width="7" height="7" viewBox="0 0 7 7"><path d="M.800.800l5.400 5.400M6.200.800L.800 6.200" stroke="#e6e6e6" stroke-width="1.800"/></svg><svg style="left:301px;top:157px;" width="8" height="7" viewBox="0 0 8 7"><path d="M3.500.500L1 3.500 3.500 6.500M7.500.500L5 3.500 7.500 6.500" fill="none" stroke="#e6e6e6" stroke-width="1.200"/></svg><div class="a" style="left:69px;top:166px;width:245px;height:18px;background:#424242;border-bottom:1px solid #383838;box-sizing:border-box"></div><div class="a" style="left:69px;top:166px;width:66px;height:18px;background:#535353"></div><div class="a" style="left:135px;top:166px;width:34px;height:17px;border-right:1px solid #383838;border-left:1px solid #383838;box-sizing:border-box"></div><span class="t" style="font-size:12px;top:168.7px;letter-spacing:-0.76px;left:75.0px;font-weight:bold;color:#f2f2f2;">Properties</span><span class="t" style="font-size:12px;top:168.7px;letter-spacing:-0.66px;left:142.0px;font-weight:bold;color:#b4b4b4;">Info</span><svg style="left:299px;top:170px;" width="11" height="8" viewBox="0 0 11 8"><path d="M0 .500h11M0 2.800h11M0 5.100h11M0 7.400h11" stroke="#cfcfcf" stroke-width="1"/></svg><div class="a" style="left:78px;top:189px;width:24px;height:23px;background:#3c3c3c;border:1px solid #5e5e5e;border-radius:2px;box-sizing:border-box"></div><svg style="left:84px;top:193px;" width="12" height="15" viewBox="0 0 12 15"><path d="M.700.700h6.800l3.800 3.800v9.800H.700z" fill="none" stroke="#ddd" stroke-width="1.200"/><path d="M7.500.700v3.800h3.800" fill="none" stroke="#ddd" stroke-width="1.200"/></svg><span class="t" style="font-size:11.5px;top:196.0px;letter-spacing:-0.49px;left:106.0px;color:#d8d8d8;">Document</span><div class="a" style="left:69px;top:217px;width:245px;height:1px;background:#464646"></div><div class="a" style="left:300px;top:218px;width:14px;height:296px;background:#4d4d4d"></div><div class="a" style="left:303px;top:221px;width:9px;height:190px;background:#696969;border-radius:4.500px"></div><svg style="left:75px;top:230px;" width="9" height="6" viewBox="0 0 9 6"><path d="M.500.500L4.500 4.500 8.500.500" fill="none" stroke="#ddd" stroke-width="1.200"/></svg><span class="t" style="font-size:11.5px;top:227.5px;letter-spacing:-0.78px;left:89.0px;font-weight:bold;color:#ececec;">Canvas</span><span class="t" style="font-size:11.5px;top:251.0px;left:118.0px;color:#d8d8d8;">W</span><div class="a" style="left:132px;top:248px;width:54px;height:17px;background:#454545;border:1px solid #616161;border-radius:2px;box-sizing:border-box"></div><span class="t" style="font-size:11.5px;top:251.2px;letter-spacing:-0.61px;left:136.0px;color:#ededed;">67.73 cm</span><span class="t" style="font-size:11.5px;top:251.0px;left:199.0px;color:#d8d8d8;">X</span><div class="a" style="left:211px;top:248px;width:54px;height:17px;background:#454545;border:1px solid #5c5c5c;border-radius:2px;box-sizing:border-box"></div><span class="t" style="font-size:11.5px;top:251.2px;letter-spacing:-0.71px;left:215.0px;color:#6f6f6f;">0 cm</span><span class="t" style="font-size:11.5px;top:275.0px;left:120.0px;color:#d8d8d8;">H</span><div class="a" style="left:132px;top:272px;width:54px;height:17px;background:#454545;border:1px solid #616161;border-radius:2px;box-sizing:border-box"></div><span class="t" style="font-size:11.5px;top:275.2px;letter-spacing:-0.68px;left:136.0px;color:#ededed;">38.1 cm</span><span class="t" style="font-size:11.5px;top:275.0px;left:199.0px;color:#d8d8d8;">Y</span><div class="a" style="left:210px;top:272px;width:54px;height:17px;background:#454545;border:1px solid #5c5c5c;border-radius:2px;box-sizing:border-box"></div><span class="t" style="font-size:11.5px;top:275.2px;letter-spacing:-0.71px;left:214.0px;color:#6f6f6f;">0 cm</span><svg style="left:86px;top:260px;" width="9" height="16" viewBox="0 0 9 16"><rect x="1.200" y=".800" width="6.600" height="8" rx="3.300" fill="none" stroke="#ddd" stroke-width="1.500"/><rect x="1.200" y="7.200" width="6.600" height="8" rx="3.300" fill="none" stroke="#ddd" stroke-width="1.500"/><path d="M4.500 5v6" stroke="#ddd" stroke-width="1.500"/></svg><svg style="left:138px;top:303px;" width="15" height="18" viewBox="0 0 15 18"><rect x=".600" y=".600" width="13.800" height="16.800" fill="none" stroke="#e0e0e0" stroke-width="1.200"/><circle cx="7.500" cy="5.500" r="2.200" fill="#e0e0e0"/><path d="M3.800 16.500v-5.500c0-1.500 1-2.200 2-2.200h3.400c1 0 2 .700 2 2.200v5.500z" fill="#e0e0e0"/></svg><div class="a" style="left:160px;top:300px;width:24px;height:24px;background:#383838;border:1px solid #606060;border-radius:3px;box-sizing:border-box"></div><svg style="left:164px;top:306px;" width="16" height="13" viewBox="0 0 16 13"><rect x=".600" y=".600" width="14.800" height="11.800" fill="none" stroke="#e8e8e8" stroke-width="1.200"/><circle cx="8" cy="4.500" r="1.900" fill="#e8e8e8"/><path d="M4 12v-3c0-1.500 1-2 2-2h4c1 0 2 .500 2 2v3z" fill="#e8e8e8"/></svg><span class="t" style="font-size:11px;top:335.9px;letter-spacing:-0.11px;left:133.0px;color:#dcdcdc;">Resolution: 72 pixels/inch</span><span class="t" style="font-size:11.5px;top:361.7px;letter-spacing:-0.92px;left:101.0px;color:#d8d8d8;">Mode</span><div class="dd" style="left:133px;top:358px;width:131px;height:19px;"></div><span class="t" style="font-size:11.5px;top:361.7px;letter-spacing:-0.70px;left:140.0px;color:#ececec;">RGB Color</span><svg style="left:253px;top:366px;" width="7" height="4" viewBox="0 0 7 4"><path d="M0 0l3.500 3.500L7 0" fill="none" stroke="#d0d0d0" stroke-width="1.300"/></svg><div class="dd" style="left:133px;top:384px;width:131px;height:19px;"></div><span class="t" style="font-size:11.5px;top:387.7px;letter-spacing:-0.37px;left:140.0px;color:#ececec;">8 Bits/Channel</span><svg style="left:253px;top:392px;" width="7" height="4" viewBox="0 0 7 4"><path d="M0 0l3.500 3.500L7 0" fill="none" stroke="#d0d0d0" stroke-width="1.300"/></svg><span class="t" style="font-size:11.5px;top:416.7px;letter-spacing:-0.56px;left:114.0px;color:#d8d8d8;">Fill</span><div class="a" style="left:133px;top:413px;width:18px;height:18px;background:#4c4c4c;border:1px solid #3c3c3c;box-sizing:border-box"></div><div class="dd" style="left:155px;top:413px;width:109px;height:18px;border-color:#5d5d5d;background:#505050"></div><span class="t" style="font-size:11.5px;top:416.7px;letter-spacing:-0.34px;left:162.0px;color:#7c7c7c;">Background Color</span><svg style="left:253px;top:421px;" width="7" height="4" viewBox="0 0 7 4"><path d="M0 0l3.500 3.500L7 0" fill="none" stroke="#777" stroke-width="1.300"/></svg><div class="a" style="left:69px;top:442px;width:231px;height:1px;background:#464646"></div><svg style="left:75px;top:455px;" width="9" height="6" viewBox="0 0 9 6"><path d="M.500.500L4.500 4.500 8.500.500" fill="none" stroke="#ddd" stroke-width="1.200"/></svg><span class="t" style="font-size:11.5px;top:452.5px;letter-spacing:-0.58px;left:89.0px;font-weight:bold;color:#ececec;">Rulers &amp; Grids</span><div class="a" style="left:78px;top:473px;width:26px;height:26px;background:#383838;border:1px solid #606060;border-radius:3px;box-sizing:border-box"></div><svg style="left:83px;top:478px;" width="16" height="16" viewBox="0 0 16 16"><path d="M0 16V3a3 3 0 0 1 3-3h13v4.500H5.500a1 1 0 0 0-1 1V16z" fill="#e4e4e4"/><path d="M7 1.200v1.600M10 1.200v1.600M13 1.200v1.600M1.200 7h1.600M1.200 10h1.600M1.200 13h1.600" stroke="#383838" stroke-width="1.100"/></svg><svg style="left:116px;top:478px;" width="17" height="17" viewBox="0 0 17 17"><rect x=".600" y=".600" width="15.800" height="15.800" fill="none" stroke="#e0e0e0" stroke-width="1.200"/><path d="M6 .600v15.800M11.200.600v15.800M.600 6h15.800M.600 11.200h15.800" stroke="#e0e0e0" stroke-width="1.100"/></svg><div class="a" style="left:148px;top:478px;width:17px;height:17px;border:1px solid #dadada;box-sizing:border-box;background:repeating-conic-gradient(#8c8c8c 0 25%,#6a6a6a 0 50%) 0 0/5px 5px"></div><div class="dd" style="left:188px;top:477px;width:76px;height:19px;"></div><span class="t" style="font-size:11.5px;top:480.7px;letter-spacing:-0.40px;left:195.0px;color:#ececec;">Centimeters</span><svg style="left:254px;top:485px;" width="7" height="4" viewBox="0 0 7 4"><path d="M0 0l3.500 3.500L7 0" fill="none" stroke="#d0d0d0" stroke-width="1.300"/></svg><div class="a" style="left:69px;top:510px;width:231px;height:1px;background:#464646"></div><div class="a" style="left:69px;top:539px;width:245px;height:1px;background:#464646"></div><div class="a" style="left:182px;top:541px;width:19px;height:4px;background:repeating-linear-gradient(90deg,#474747 0 1px,transparent 1px 2px)"></div>
<div class="a" style="left:474px;top:150px;width:920px;height:732px;background:#535353;border-radius:10px;box-shadow:0 0 0 .500px rgba(0,0,0,.35);overflow:hidden"><div class="a" style="left:0px;top:0px;width:920px;height:29px;background:#d1d2d4;border-bottom:1px solid #2c2c2c;border-top:1px solid #e2e2e4;box-sizing:border-box;box-shadow:inset 0 -1px 0 #dedee0"></div></div><div class="a" style="left:482px;top:158px;width:12px;height:12px;background:#fe5f57;border-radius:50%;border:.500px solid #e0443e;box-sizing:border-box"></div><div class="a" style="left:502px;top:158px;width:12px;height:12px;background:#b9b9bb;border-radius:50%;border:.500px solid #a5a5a7;box-sizing:border-box"></div><div class="a" style="left:522px;top:158px;width:12px;height:12px;background:#b9b9bb;border-radius:50%;border:.500px solid #a5a5a7;box-sizing:border-box"></div><span class="t" style="font-size:18px;top:212.8px;letter-spacing:-0.00px;left:524.0px;font-weight:bold;color:#ffffff;">Generate image</span><svg style="left:833px;top:220px;" width="14" height="4" viewBox="0 0 14 4"><circle cx="2" cy="2" r="1.500" fill="#e6e6e6"/><circle cx="7" cy="2" r="1.500" fill="#e6e6e6"/><circle cx="12" cy="2" r="1.500" fill="#e6e6e6"/></svg><div class="a" style="left:524px;top:256px;width:330px;height:123px;background:#464646;border:1.500px solid #1268d8;border-bottom-width:2px;box-sizing:border-box"></div><span class="t" style="font-size:12.5px;top:259.5px;letter-spacing:0.15px;left:527.0px;color:#f0f0f0;">Kerstboom met lichtjes</span><span class="t" style="font-size:14.5px;top:406.5px;letter-spacing:0.12px;left:524.0px;color:#f0f0f0;">Content type</span><div class="a" style="left:524px;top:437px;width:161px;height:34px;border:1px solid #7b7b7b;box-sizing:border-box;box-shadow:inset 0 0 0 1px #5e5e5e"></div><span class="t" style="font-size:14.5px;top:446.7px;letter-spacing:0.24px;left:532.0px;color:#f0f0f0;">Art</span><div class="a" style="left:693px;top:437px;width:161px;height:34px;border:1px solid #7b7b7b;box-sizing:border-box;box-shadow:inset 0 0 0 1px #5e5e5e"></div><span class="t" style="font-size:14.5px;top:446.7px;letter-spacing:0.03px;left:701.0px;color:#f0f0f0;">Photo</span><div class="a" style="left:524px;top:480px;width:330px;height:55px;border:1px solid #717171;box-sizing:border-box"></div><svg style="left:537px;top:499px;" width="15" height="15" viewBox="0 0 15 15"><rect x="0" y="0" width="6.500" height="6.500" fill="#e2e2e2"/><rect x="9" y="9.500" width="6" height="5" fill="#e2e2e2"/><rect x="8.500" y="8.500" width="6.500" height="6.500" fill="none" stroke="#e2e2e2" stroke-width="1"/><rect x=".500" y="9" width="5.500" height="5.500" fill="none" stroke="#e2e2e2" stroke-width="1"/><rect x="2.200" y="10.700" width="2.100" height="2.100" fill="#e2e2e2"/><path d="M9 0h2v2H9zM13 0h2v2h-2zM11 2h2v2h-2zM9 4h2v2H9zM13 4h2v2h-2z" fill="#e2e2e2"/></svg><span class="t" style="font-size:15.5px;top:499.2px;letter-spacing:-0.35px;left:566.0px;color:#f4f4f4;">Effects</span><svg style="left:831px;top:501px;" width="8" height="13" viewBox="0 0 8 13"><path d="M1 1l6 5.500L1 12" fill="none" stroke="#e8e8e8" stroke-width="1.600"/></svg><span class="t" style="font-size:14.5px;top:564.5px;letter-spacing:-0.21px;left:524.0px;color:#f0f0f0;">Reference image</span><div class="a" style="left:524px;top:593px;width:330px;height:55px;border:1px solid #717171;box-sizing:border-box"></div><svg style="left:536px;top:612px;" width="17" height="16" viewBox="0 0 17 16"><rect x="3.600" y=".600" width="12.800" height="10.800" fill="none" stroke="#e2e2e2" stroke-width="1.200"/><path d="M4 10l4-5 3 3.500 2-2 3 3.500v1H4z" fill="#e2e2e2"/><circle cx="13" cy="3.500" r="1" fill="#e2e2e2"/><rect x="0" y="8" width="7" height="8" fill="#535353"/><path d="M1 15l4.500-4.500M2 10h4v4" fill="none" stroke="#e2e2e2" stroke-width="1.500"/></svg><span class="t" style="font-size:15.5px;top:612.2px;letter-spacing:-0.61px;left:566.0px;color:#f4f4f4;">Style</span><svg style="left:831px;top:614px;" width="8" height="13" viewBox="0 0 8 13"><path d="M1 1l6 5.500L1 12" fill="none" stroke="#e8e8e8" stroke-width="1.600"/></svg><div class="a" style="left:524px;top:656px;width:330px;height:55px;border:2px solid #fff;background:#393939;box-sizing:border-box"></div><svg style="left:536px;top:675px;" width="17" height="16" viewBox="0 0 17 16"><rect x="3.600" y=".600" width="12.800" height="10.800" fill="none" stroke="#e2e2e2" stroke-width="1.200"/><path d="M4 10l4-5 3 3.500 2-2 3 3.500v1H4z" fill="#e2e2e2"/><circle cx="13" cy="3.500" r="1" fill="#e2e2e2"/><rect x="0" y="8" width="7" height="8" fill="#393939"/><path d="M1 15l4.500-4.500M2 10h4v4" fill="none" stroke="#e2e2e2" stroke-width="1.500"/></svg><svg style="left:545px;top:683px;" width="9" height="9" viewBox="0 0 9 9"><circle cx="4.500" cy="4.500" r="4.500" fill="#2a8ef5"/><path d="M2.300 4.600l1.600 1.600 2.900-3" fill="none" stroke="#fff" stroke-width="1.200"/></svg><span class="t" style="font-size:15.5px;top:675.0px;letter-spacing:-0.51px;left:566.0px;color:#f4f4f4;">Composition</span><svg style="left:831px;top:677px;" width="8" height="13" viewBox="0 0 8 13"><path d="M1 1l6 5.500L1 12" fill="none" stroke="#e8e8e8" stroke-width="1.600"/></svg><svg style="left:530px;top:742px;" width="17" height="16" viewBox="0 0 17 16"><path d="M4 7.500A5 5 0 1 1 8.500 12.500" fill="none" stroke="#e2e2e2" stroke-width="1.500"/><path d="M.500 7l4.500-3 .500 5z" fill="#e2e2e2"/><path d="M0 15h17" stroke="#e2e2e2" stroke-width="1.200"/></svg><div class="a" style="left:668px;top:736px;width:72px;height:30px;border:2px solid #f2f2f2;border-radius:15px;box-sizing:border-box"></div><span class="t" style="font-size:14.5px;top:743.0px;letter-spacing:-1.20px;left:683.5px;font-weight:bold;color:#ffffff;">Cancel</span><div class="a" style="left:752px;top:736px;width:102px;height:30px;background:#0a6fe2;border-radius:15px"></div><svg style="left:766px;top:743px;" width="14" height="14" viewBox="0 0 14 14"><path d="M7 2.500H3a1.500 1.500 0 0 0-1.500 1.500v7A1.500 1.500 0 0 0 3 12.500h7A1.500 1.500 0 0 0 11.500 11V7.500" fill="none" stroke="#fff" stroke-width="1.300"/><path d="M10.500 0l.900 2.100 2.100.900-2.100.900-.900 2.100-.900-2.100-2.100-.900 2.100-.900z" fill="#fff"/><path d="M5.500 6.500l.600 1.400 1.400.600-1.400.600-.600 1.400-.600-1.400-1.400-.600 1.400-.600z" fill="#fff"/></svg><span class="t" style="font-size:14.5px;top:743.0px;letter-spacing:-1.12px;left:784.0px;font-weight:bold;color:#ffffff;">Generate</span>
<div class="a" style="left:892px;top:188px;width:492px;height:685px;background:#353535"></div><span class="t" style="font-size:15.5px;top:210.0px;letter-spacing:-0.12px;left:922.0px;font-weight:bold;color:#fff;">Composition reference</span><span class="t" style="font-size:13.5px;top:234.0px;letter-spacing:0.06px;left:922.0px;color:#ececec;">Select from the gallery or choose your own image</span><svg style="left:1329px;top:213px;" width="15" height="11" viewBox="0 0 15 11"><path d="M14.500 5.500H1.500M6 1L1.500 5.500 6 10" fill="none" stroke="#f0f0f0" stroke-width="1.700"/></svg><div class="a" style="left:966px;top:290px;width:96px;height:96px;background:#fff;border-radius:8px;overflow:hidden;color:#000;font-weight:bold;font-size:32px;line-height:1;white-space:nowrap"><span class="a" style="left:-.500px;top:16.500px;font-size:26.500px;-webkit-text-stroke:.600px #000">RETTIGE</span><span class="a" style="left:-.500px;top:53.500px;font-size:26.500px;-webkit-text-stroke:.600px #000">EESTEN!</span></div><div class="a" style="left:1037px;top:295px;width:19px;height:19px;background:#4d4d4d;border-radius:50%"></div><svg style="left:1041px;top:298px;" width="11" height="13" viewBox="0 0 11 13"><path d="M0 2.500h11M3.500 2.500V.700h4v1.800" fill="none" stroke="#e6e6e6" stroke-width="1.200"/><path d="M1.500 4h8l-.700 8.500H2.200z" fill="none" stroke="#e6e6e6" stroke-width="1.200"/><path d="M4 5.500v5.500M5.500 5.500v5.500M7 5.500v5.500" stroke="#e6e6e6" stroke-width=".900"/></svg><div class="a" style="left:1117px;top:300px;width:180px;height:30px;background:#6f6f6f;border-radius:15px"></div><span class="t" style="font-size:15px;top:306.6px;letter-spacing:-0.38px;left:1157.0px;font-weight:bold;color:#fff;">Replace image</span><span class="t" style="font-size:13px;top:340.7px;letter-spacing:-0.03px;left:1127.5px;color:#ececec;">Match the composition from</span><span class="t" style="font-size:13px;top:356.2px;letter-spacing:-0.16px;left:1132.0px;color:#ececec;">your own reference image.</span><span class="t" style="font-size:12.5px;top:401.0px;letter-spacing:0.18px;left:966.0px;color:#ececec;">Strength</span><div class="a" style="left:975px;top:425px;width:318px;height:3px;background:#6c6c6c;border-radius:1.500px"></div><svg style="left:1288px;top:425px;" width="12" height="12" viewBox="0 0 12 12"><path d="M6 .500L11 6v4.500a1 1 0 0 1-1 1H2a1 1 0 0 1-1-1V6z" fill="#f4f4f4"/></svg><span class="t" style="font-size:15.5px;top:458.3px;letter-spacing:-0.68px;left:922.0px;font-weight:bold;color:#fff;">Gallery</span>
<div class="a" style="left:923px;top:495px;width:421px;height:337px;border:1px solid #484848;box-sizing:border-box;overflow:hidden;background:#363636"><svg style="left:14px;top:13px;overflow:hidden" width="83" height="83" viewBox="0 0 83 83"><rect width="83" height="83" fill="#cdd4d6"/><rect width="83" height="4" fill="#e4e6e6"/><rect x="62" y="4" width="21" height="50" fill="#bcc5c8"/><rect x="0" y="0" width="7" height="52" fill="#2f373d"/><rect x="1.500" y="3" width="4" height="40" fill="#6e7f78"/><rect x="7" y="0" width="4.500" height="56" fill="#e9eaea"/><path d="M0 56h83v27H0z" fill="#b98a5c"/><path d="M8 63l66-1 9 8v8H0v-8z" fill="#dad7d4"/><ellipse cx="41" cy="8.500" rx="7" ry="7.500" fill="#e6c7ad"/><ellipse cx="41" cy="9" rx="3.500" ry="5" fill="#f6e3d0"/><rect x="15.500" y="47" width="3" height="12" fill="#cfc6b8"/><circle cx="16" cy="38" r="6.500" fill="#4d6b40"/><circle cx="19" cy="43" r="4" fill="#5c7a48"/><circle cx="12.500" cy="42" r="3.500" fill="#44603a"/><path d="M5 40l2 8 2-7z" fill="#7a6a3a"/><rect x="0" y="51" width="9" height="9" fill="#8a5f3d"/><rect x="27" y="45" width="56" height="10" rx="1.500" fill="#8b8c8f"/><rect x="22" y="50" width="6" height="12" rx="1.500" fill="#7f7f82"/><rect x="26" y="54" width="30" height="6" fill="#99999b"/><path d="M55 55h28v20H66l-11-9z" fill="#a29e9b"/><path d="M64 66h19v10H66z" fill="#7d7875"/><rect x="53" y="45.500" width="10" height="9" rx="1.500" fill="#dba184" transform="rotate(-6 58 50)"/><rect x="65" y="48" width="11" height="9" rx="1.500" fill="#c5cbd1" transform="rotate(8 70 52)"/><rect x="75" y="50" width="8" height="8" fill="#5d6f7b"/><ellipse cx="39" cy="59.500" rx="13" ry="3" fill="#c08a60"/><path d="M31 61l-1.500 12M47 61l1.500 12" stroke="#a06c45" stroke-width="1.200"/><rect x="36.500" y="52" width="3" height="6" fill="#9b9b95"/><circle cx="38" cy="50" r="2.500" fill="#b9b39a"/></svg><svg style="left:111px;top:13px;overflow:hidden" width="83" height="83" viewBox="0 0 83 83"><defs><linearGradient id="g2" x2="0" y2="1"><stop offset="0" stop-color="#a2a2a2"/><stop offset=".350" stop-color="#bdbdbd"/><stop offset=".450" stop-color="#f3f3f3"/><stop offset="1" stop-color="#fbfbfb"/></linearGradient><linearGradient id="g2b"><stop offset="0" stop-color="#e8e8e8"/><stop offset=".600" stop-color="#555"/><stop offset="1" stop-color="#222"/></linearGradient></defs><rect width="83" height="83" fill="url(#g2)"/><rect x="14" y="38" width="13" height="32" fill="url(#g2b)"/><rect x="12" y="47" width="4" height="23" fill="#c9c9c9"/><rect x="30" y="49" width="4.500" height="20" fill="#bdbdbd"/><rect x="30" y="58" width="6" height="12" fill="#777"/><path d="M40.500 27l.800 3 2.200 8 1.200 31h-8l1.200-31 2-8z" fill="#6e6e6e"/><rect x="36" y="55" width="4" height="14" fill="#8c8c8c"/><rect x="47" y="39.500" width="5.500" height="31" fill="#0f0f0f"/><path d="M52 53l6 3v14h-6z" fill="#1c1c1c"/><rect x="56.500" y="41" width="7" height="28" fill="#b3b3b3"/><rect x="60.500" y="41" width="3" height="28" fill="#7d7d7d"/><rect x="64.500" y="48" width="6" height="22" fill="#2f2f2f"/><rect x="73" y="60" width="4.500" height="10" fill="#9a9a9a"/><path d="M1 70l3-3 3 1 3-2 4 2v2z" fill="#9a9a9a"/><rect x="0" y="69.500" width="83" height="3" fill="#c4c4c4"/><rect x="0" y="72.500" width="83" height="10.500" fill="#3b3b3b"/></svg><svg style="left:208px;top:13px;overflow:hidden" width="83" height="83" viewBox="0 0 83 83"><rect width="83" height="83" fill="#ececec"/><path d="M0 0h26l12 54v8L0 64z" fill="#cbcbc9"/><path d="M0 12l37 43v7L0 64z" fill="#50524e"/><path d="M0 12l37 43" stroke="#a5a5a3" stroke-width="1.200"/><path d="M83 0H58L46 55v7l37 2z" fill="#d2d2d0"/><path d="M83 6L47 56v6l36 2z" fill="#454742"/><path d="M23.500 0l13.500 55M28.500 0L39 55M60.500 0L47 55M55.500 0L45 55" stroke="#555" stroke-width="1.100" fill="none"/><path d="M0 62h83v21H0z" fill="#cdcac3"/><path d="M0 62h83v2.500H0z" fill="#b9b6ae"/><path d="M41 62l-5 21" stroke="#4a4a46" stroke-width=".900"/><rect x="40" y="56" width="4" height="6" fill="#6f7f86"/></svg><svg style="left:305px;top:13px;overflow:hidden" width="83" height="83" viewBox="0 0 83 83"><defs><linearGradient id="g4" x1="0" y1="0" x2=".600" y2="1"><stop offset="0" stop-color="#7fa9b7"/><stop offset=".500" stop-color="#c4d6db"/><stop offset="1" stop-color="#e9eeee"/></linearGradient><radialGradient id="g4s" cx=".650" cy=".300" r=".800"><stop offset="0" stop-color="#9fd4e4"/><stop offset=".600" stop-color="#62a9c1"/><stop offset="1" stop-color="#4b8fa8"/></radialGradient></defs><rect width="83" height="83" fill="url(#g4)"/><rect x="50" width="33" height="50" fill="#7fa9b7" opacity=".350"/><circle cx="41.500" cy="24" r="13.500" fill="url(#g4s)"/><path d="M0 68l25-5h54v20H0z" fill="#79b9d0"/><path d="M0 68l25-5h54l-8 6H0z" fill="#a6d2e0"/><path d="M45 69h34v14H45z" fill="#8ec6d9"/><path d="M47 69v14M51 69v14M55 69v14M59 69v14M63 69v14M67 69v14M71 69v14M75 69v14" stroke="#5fa3bc" stroke-width="1"/><path d="M25 52l9-3 25 1v22l-18 4-16-5z" fill="#6aaec7"/><path d="M25 52l9-3 25 1-18 3z" fill="#5a9db6"/><path d="M41 53l18-3v22l-18 4z" fill="#8ac3d7"/></svg><svg style="left:14px;top:109px;overflow:hidden" width="83" height="83" viewBox="0 0 83 83"><defs><pattern id="p5" width="6" height="6" patternUnits="userSpaceOnUse"><rect width="6" height="6" fill="#c2c2c2"/><path d="M0 3a3 3 0 0 1 6 0M-3 6a3 3 0 0 1 6 0M3 6a3 3 0 0 1 6 0" fill="none" stroke="#555" stroke-width=".800"/></pattern><pattern id="p5b" width="9" height="8" patternUnits="userSpaceOnUse"><rect width="9" height="8" fill="#b9b9b9"/><path d="M0 0q4.500 9 9 0M-4.500 4q4.500 9 9 0M4.500 4q4.500 9 9 0" fill="#d9d9d9" stroke="#444" stroke-width=".800"/></pattern></defs><rect width="83" height="83" fill="url(#p5)"/><path d="M16 52c-3-18 4-34 25-34s29 16 26 34c-2 18-6 31-6 31H22s-4-13-6-31z" fill="#c9c9c9" stroke="#444" stroke-width="1"/><path d="M12 58c8-8 50-8 60 0l-5 25H17z" fill="url(#p5b)"/><path d="M18 8c3 8 8 12 14 13M66 8c-3 8-8 12-14 13" fill="none" stroke="#3a3a3a" stroke-width="2"/><path d="M29 13h25l-5 16H35z" fill="#a6a6a6" stroke="#3a3a3a" stroke-width="1"/><circle cx="31" cy="30" r="7" fill="#dedede" stroke="#444" stroke-width="1.200"/><circle cx="54" cy="30" r="7" fill="#dedede" stroke="#444" stroke-width="1.200"/><circle cx="31.500" cy="30" r="3.200" fill="#111"/><circle cx="53.500" cy="30" r="3.200" fill="#111"/><path d="M22 24l12 4M62 24l-12 4" stroke="#222" stroke-width="2"/><path d="M41 34l2.500 9-2.500 3-2.500-3z" fill="#eee" stroke="#333" stroke-width=".800"/><path d="M20 42c8 10 36 10 44 0" fill="none" stroke="#333" stroke-width="1.500"/></svg><svg style="left:111px;top:109px;overflow:hidden" width="83" height="83" viewBox="0 0 83 83"><rect width="83" height="83" fill="#f8f8f8"/><g fill="none" stroke="#777" stroke-width=".800"><path d="M42 6c12-3 24 6 25 20 0 12-8 22-24 23-16 0-27-8-26-21C18 16 28 8 42 6z"/><path d="M28 14c8-8 26-5 30 6 4 10-3 22-16 23-12 0-20-8-19-17"/><path d="M33 22c2-8 14-10 20-4 5 6 2 16-7 18-8 1-14-4-13-14z"/><circle cx="42" cy="21" r="7"/><circle cx="42" cy="20" r="4"/><circle cx="42" cy="20" r="2"/><path d="M17 28c3 12 14 20 26 20M66 26c0 10-6 20-20 22"/><path d="M40 48c1 10 0 20 1 29M44 48c0 10 0 20-1 29"/><path d="M9 52c12-3 24 2 29 18-14 3-25-4-29-18zM9 52l29 18"/><path d="M73 51c-12-3-23 2-28 17 14 3 25-4 28-17zM73 51L45 68"/><path d="M15 56l14 5M20 63l12 4M64 55l-12 6M60 62l-10 4"/></g><circle cx="42" cy="20" r="4" fill="#bdbdbd" opacity=".600"/></svg><svg style="left:208px;top:109px;overflow:hidden" width="83" height="83" viewBox="0 0 83 83"><rect width="83" height="83" fill="#fbfbfb"/><g fill="none" stroke="#444" stroke-width=".900"><path d="M18 12c3-3 6-2 8 0 2-2 5-2 7 0M55 10c3-3 6-3 9-1 3-3 7-3 10 0 3-1 6 0 8 1"/><circle cx="73" cy="23" r="6" stroke="#888"/><path d="M0 18c8 6 14 14 22 18 6-4 12-6 18-2M83 22c-10 8-18 16-28 22M83 30c-8 6-14 12-22 16M0 28c6 6 12 12 18 16" stroke="#777"/><path d="M0 46h83" stroke="#888"/><path d="M52 15c-5-3-12 0-13 8-1 10 8 18 14 26 5 7 9 12 6 16-4 3-20 2-32 0-8-2-14-6-18-12 6 0 10-3 14-8 6-6 16-5 22 2"/><path d="M52 15c3 1 6 5 11 9-3 1-6 0-9-2" stroke="#222" stroke-width="1.200"/><path d="M46 22c-2 8 6 16 12 24 6 8 8 14 4 18"/><path d="M12 52c8-6 18-6 30 4M10 56c10-4 20-2 32 6M14 60c8-2 18 0 26 4M8 50c4-8 18-12 32-2"/><path d="M4 68c20 4 50 4 76 0M2 73c24 4 52 4 80 0M8 78c20 3 46 3 70 0M20 65c16 3 40 3 56-1" stroke="#666"/><path d="M60 66c2 4 0 8-2 11"/></g><circle cx="53" cy="18" r=".900" fill="#111"/></svg><svg style="left:305px;top:109px;overflow:hidden" width="83" height="83" viewBox="0 0 83 83"><defs><linearGradient id="g8"><stop offset="0" stop-color="#4b3e35"/><stop offset=".450" stop-color="#8a7868"/><stop offset=".600" stop-color="#c9b8a4"/><stop offset="1" stop-color="#e9dcc8"/></linearGradient><linearGradient id="g8w" x2="0" y2="1"><stop offset="0" stop-color="#f3e6cf"/><stop offset=".500" stop-color="#c8a768"/><stop offset="1" stop-color="#d9c7a4"/></linearGradient></defs><rect width="83" height="83" fill="url(#g8)"/><rect x="53" y="0" width="8" height="60" fill="#d9cdbd"/><rect x="61" y="0" width="22" height="60" fill="url(#g8w)"/><rect x="79" y="0" width="4" height="64" fill="#f4ede2"/><path d="M52 52l31 12v19H44z" fill="#efe9e1"/><path d="M58 50l25 11v4L56 53z" fill="#8a6f55"/><path d="M17 14c1-6 3-10 5-10 3 1 6 6 8 9 3-1 6 0 9 1 2-4 5-8 8-9 2 2 1 9 0 14 3 6 2 14-1 20 4 8 8 20 6 32v12H2c2-14 6-26 12-36-2-8-1-14 1-20 0-4 1-9 2-13z" fill="#f2ede7"/><path d="M18.500 13c.800-4 2-7 3.500-7 2 1 4 5 5 8-3 0-6 1-8.500 3z" fill="#eab9a8"/><path d="M40 13c1.500-3 3.500-5 5.500-6 .800 2 .200 6-.500 10z" fill="#eec5b6"/><ellipse cx="31" cy="27.500" rx="2.600" ry="2.400" fill="#e8831d"/><ellipse cx="42.500" cy="29" rx="2.200" ry="2.400" fill="#e8831d"/><path d="M37.500 35l2.500.500-1.200 2z" fill="#e7a9a4"/><path d="M10 60c6-14 10-20 8-32" fill="none" stroke="#d9cfc4" stroke-width="3" opacity=".700"/></svg><svg style="left:14px;top:205px;overflow:hidden" width="83" height="83" viewBox="0 0 83 83"><defs><linearGradient id="g9" x2="0" y2="1"><stop offset="0" stop-color="#8d8d8d"/><stop offset=".350" stop-color="#cfcfcf"/><stop offset="1" stop-color="#d9d9d9"/></linearGradient><linearGradient id="g9m" x2="0" y2="1"><stop offset="0" stop-color="#5c5c5c"/><stop offset="1" stop-color="#bdbdbd"/></linearGradient><linearGradient id="g9r" x2="0" y2="1"><stop offset="0" stop-color="#55585b"/><stop offset="1" stop-color="#2b2e31"/></linearGradient></defs><rect width="83" height="83" fill="url(#g9)"/><path d="M0 17l8 4 8 3 6-4 6 6 8 8 8 2H0z" fill="url(#g9m)"/><path d="M48 31l8-4 8-2 10-3 9-1v14H50z" fill="#a6a6a6"/><path d="M0 30c10 4 22 10 30 16-6 6-18 10-30 12z" fill="#777"/><path d="M38 37c6-1 8 0 10 2-6 4-12 8-11 14 2 8 16 12 30 18 8 4 12 8 16 12H62C52 72 30 68 14 62c-8-3-10-6-6-8 12-3 22-9 30-17z" fill="#dcdcdc"/><path d="M83 24c-10 8-22 18-36 28-6 4-10 6-9 9 6 4 28 10 45 18z" fill="url(#g9r)"/><path d="M45 38c8-2 20-4 38-10v6c-14 6-26 8-38 8z" fill="#9a9a9a" opacity=".700"/><path d="M0 54l3 3 2-2 3 5 3-2 4 5 3-1 4 4 4 0 4 3 5 1 5 4 6 2 5 5 4 3H0z" fill="#0b0b0b"/></svg><svg style="left:111px;top:205px;overflow:hidden" width="83" height="83" viewBox="0 0 83 83"><defs><pattern id="p10" width="10" height="12" patternUnits="userSpaceOnUse" patternTransform="rotate(30)"><rect width="10" height="12" fill="#ececec"/><path d="M5 0c4 3 4 9 0 12-4-3-4-9 0-12zM5 0v12" fill="#f6f6f6" stroke="#666" stroke-width=".700"/></pattern></defs><rect width="83" height="83" fill="url(#p10)"/><ellipse cx="50" cy="38" rx="20" ry="30" fill="#f2f2f2"/><path d="M0 62c20-6 40 8 58 8 10 0 18-2 25-6v19H36C24 72 12 68 0 70z" fill="#b9b9b9" stroke="#444" stroke-width=".800"/><path d="M4 66c16-2 30 6 46 10M10 72c10 0 20 4 28 8" stroke="#666" stroke-width=".700" fill="none"/><path d="M34 8c4-2 8-1 10 2 6 2 9 6 10 10 2 8-2 16-6 22 0 8-6 16-16 20l-2 4-3-2c-6 0-10-2-14-6C22 46 28 38 32 30c0-8 0-14 2-22z" fill="#fbfbfb" stroke="#333" stroke-width=".900"/><path d="M37 16c2-4 8-4 10 0 2 4-2 8-6 7-3 0-5-3-4-7z" fill="none" stroke="#111" stroke-width="2"/><circle cx="45" cy="17" r="1.100" fill="#111"/><path d="M50 17l9 1-8 3z" fill="#333"/><path d="M44 28c4 0 7 2 8 5-3 1-7-1-8-5z" fill="#111"/><path d="M14 56c6-8 16-14 30-16-4 10-14 18-30 16z" fill="#d9d9d9" stroke="#222" stroke-width=".900"/><path d="M22 46l8 2M26 42l8 3" stroke="#111" stroke-width="1.600"/><path d="M16 56L1 82M20 58L5 83M23 60L10 83" stroke="#444" stroke-width=".800"/><path d="M34 62l2 8M42 60l4 9" stroke="#333" stroke-width="1"/></svg><svg style="left:208px;top:205px;overflow:hidden" width="83" height="83" viewBox="0 0 83 83"><defs><linearGradient id="g11" x2="0" y2="1"><stop offset="0" stop-color="#a7bdc6"/><stop offset=".700" stop-color="#b3c6cd"/><stop offset="1" stop-color="#aebfc6"/></linearGradient></defs><rect width="83" height="83" fill="url(#g11)"/><rect y="58" width="83" height="25" fill="#b4c7ce"/><path d="M10 83l18-25M25 83l12-25M41 83V58M57 83L46 58M72 83L55 58M83 74L64 58M0 74l19-16" stroke="#c3d3d8" stroke-width=".700"/><ellipse cx="30" cy="50" rx="10" ry="14" fill="#98afb9" opacity=".350"/><circle cx="41.500" cy="24" r="5.200" fill="#e9cabc"/><circle cx="41.500" cy="36" r="5.600" fill="#d0d0ce"/><circle cx="41.500" cy="50" r="7" fill="#5c7a8a"/><circle cx="40" cy="22.500" r="2.500" fill="#f3dbd0" opacity=".800"/><circle cx="40" cy="34.500" r="2.600" fill="#e2e2e0" opacity=".800"/><circle cx="39.500" cy="48" r="3" fill="#7591a0" opacity=".800"/></svg><svg style="left:305px;top:205px;overflow:hidden" width="83" height="83" viewBox="0 0 83 83"><defs><pattern id="p12" width="7" height="9" patternUnits="userSpaceOnUse"><rect width="7" height="9" fill="#bcbcbc"/><path d="M3.500 0L0 4h2L0 7.500h7L5 4h2z" fill="#dadada" stroke="#3c3c3c" stroke-width=".700"/></pattern></defs><rect width="83" height="83" fill="url(#p12)"/><path d="M32 22l8-8 8 2 6 8-4 10-12 2z" fill="#ededed"/><path d="M83 83c-14-4-34-6-38-16-3-8 6-10 2-16-2-3-6-4-12-4 8 2 8 6 2 10-10 6-18 16-16 26z" fill="#e9e9e9" stroke="#333" stroke-width=".800"/><path d="M76 83c-14-4-28-8-30-16-2-6 4-10 0-14M66 83c-12-4-22-8-24-16-1-5 2-8 0-12M54 83c-8-4-14-9-15-15 0-4 1-7-1-10M42 83c-6-4-9-9-9-14" fill="none" stroke="#555" stroke-width=".700"/><g stroke="#2e2e2e" fill="#cfcfcf" stroke-width=".800"><path d="M8 0h4l1 60-3 10H5z"/><path d="M25 0h4l1 56-2 6h-5z"/><path d="M67 0h4l2 62 3 8h-9z"/><path d="M1 0h2v50H0z"/><path d="M79 0h3v54h-4z"/></g><g stroke="#333" stroke-width=".900" fill="none"><path d="M10 14L20 4M27 18l8-10M69 16L58 4M69 24l10-10M12 26L2 16M29 30L20 22"/></g><path d="M14 40l4-8 4 8-2 0 3 7-3 0 3 8H13l3-8h-3l3-7z" fill="#e4e4e4" stroke="#333" stroke-width=".700"/><path d="M0 72c6-6 14-6 18 2 4-4 10-2 12 4v5H0z" fill="#a9a9a9" stroke="#333" stroke-width=".800"/><path d="M50 62c4-5 12-5 14 0 6-2 12 0 14 6 3 0 5 2 5 4v6c-12-2-26-6-33-16z" fill="#a2a2a2" stroke="#333" stroke-width=".800"/></svg><svg style="left:14px;top:301px;overflow:hidden" width="83" height="83" viewBox="0 0 83 83"><defs><linearGradient id="g13"><stop offset="0" stop-color="#c7af9d"/><stop offset="1" stop-color="#e6dbd1"/></linearGradient><radialGradient id="g13s" cx=".350" cy=".300" r=".800"><stop offset="0" stop-color="#f1e7dd"/><stop offset=".700" stop-color="#d9c6b6"/><stop offset="1" stop-color="#b79f8e"/></radialGradient></defs><rect width="83" height="83" fill="url(#g13)"/><circle cx="41.500" cy="20" r="8.300" fill="url(#g13s)"/><circle cx="23.500" cy="30" r="8.300" fill="url(#g13s)"/><circle cx="59.500" cy="30" r="8.300" fill="url(#g13s)"/></svg><svg style="left:111px;top:301px;overflow:hidden" width="83" height="83" viewBox="0 0 83 83"><defs><linearGradient id="g14" x2=".300" y2="1"><stop offset="0" stop-color="#878d9d"/><stop offset="1" stop-color="#a9abb6"/></linearGradient></defs><rect width="83" height="83" fill="url(#g14)"/><path d="M22 34c4-12 14-18 24-16" fill="none" stroke="#7a8090" stroke-width="6" opacity=".500"/><path d="M22 31l8-5 8 4v4H22z" fill="#c9ccd2"/><path d="M46 30l8-4 7 4v4H46z" fill="#d9dce0"/><path d="M34 30l8 4 6-4v4H34z" fill="#5d7583"/><path d="M34 21l8-5 7 4v9l-7 5-8-4z" fill="#c9994a"/><path d="M34 21l8-5 7 4-7 4z" fill="#e4bd72"/><path d="M42 24l7-4v9l-7 5z" fill="#a87a34"/></svg><svg style="left:208px;top:301px;overflow:hidden" width="83" height="83" viewBox="0 0 83 83"><defs><linearGradient id="g15" x2="0" y2="1"><stop offset="0" stop-color="#6c6c6c"/><stop offset=".200" stop-color="#b5b5b5"/><stop offset=".330" stop-color="#dedede"/><stop offset="1" stop-color="#e8e8e8"/></linearGradient></defs><rect width="83" height="83" fill="url(#g15)"/><path d="M0 33c6-1 10-3 14-5l6-1 3 3 10 4z" fill="#3a3a3a"/><path d="M20 27l4 3 12 4h-20z" fill="#9a9a9a"/><path d="M38 34c8-3 14-7 20-10l3 1 8 5 14 4z" fill="#2f2f2f"/><path d="M58 24l4 2 21 8H62z" fill="#d6d6d6"/><path d="M58 24c2 4 3 7 4 10h-6z" fill="#8a8a8a"/><path d="M0 33h83v50H0z" fill="#e9e9e9"/></svg><svg style="left:305px;top:301px;overflow:hidden" width="83" height="83" viewBox="0 0 83 83"><defs><linearGradient id="g16" x2="0" y2="1"><stop offset="0" stop-color="#cbdcdb"/><stop offset="1" stop-color="#dbe6e5"/></linearGradient></defs><rect width="83" height="83" fill="url(#g16)"/><path d="M40.500 24l3 10h-6.500z" fill="#16a4c3"/><path d="M40.500 24l1 10h-4.500z" fill="#4cc3dc"/></svg><div class="a" style="left:402px;top:0px;width:17px;height:335px;background:#414141"></div><div class="a" style="left:406px;top:2px;width:9px;height:188px;background:#686868;border-radius:4.500px"></div></div>
<div class="a" style="left:1631px;top:64px;width:289px;height:13px;background:#474747"></div><div class="a" style="left:1669px;top:77px;width:3px;height:41px;background:#484848"></div><svg style="left:1656px;top:67px;" width="8" height="6" viewBox="0 0 8 6"><path d="M3 .500L.500 3 3 5.500M7 .500L4.500 3 7 5.500" fill="none" stroke="#dcdcdc" stroke-width="1"/></svg><svg style="left:1896px;top:67px;" width="8" height="6" viewBox="0 0 8 6"><path d="M.500.500L3 3 .500 5.500M4.500.500L7 3 4.500 5.500" fill="none" stroke="#dcdcdc" stroke-width="1"/></svg><div class="a" style="left:1631px;top:77px;width:39px;height:41px;background:#535353;border:1px solid #3c3c3c;border-top:none;box-sizing:border-box"></div><div class="a" style="left:1641px;top:80px;width:19px;height:4px;background:repeating-linear-gradient(90deg,#454545 0 1px,transparent 1px 2px)"></div><svg style="left:1640px;top:90px;" width="21" height="18" viewBox="0 0 21 18"><path d="M0 1.500h2M0 4.500h2M0 7.500h2M3.500 1.500h3.500M3.500 4.500h3.500M3.500 7.500h3.500" stroke="#d2d2d2" stroke-width="1.300"/><path d="M14 1a3 3 0 0 1 2.300 5c-.800 1-.800 2.200.200 3.200H20v3.500H8V9.200h3.500c1-1 1-2.200.200-3.200A3 3 0 0 1 14 1z" fill="#d2d2d2"/><rect x="8" y="14.500" width="12" height="2" fill="#d2d2d2"/></svg><div class="a" style="left:1671px;top:77px;width:249px;height:1000px;background:#535353;border-left:1px solid #383838;box-sizing:border-box"></div><div class="a" style="left:1672px;top:77px;width:248px;height:17px;background:#424242;border-bottom:1px solid #383838;box-sizing:border-box"></div><div class="a" style="left:1672px;top:77px;width:58px;height:16px;background:#494949;border-right:1px solid #3a3a3a;box-sizing:border-box"></div><div class="a" style="left:1730px;top:77px;width:56px;height:16px;background:#494949;border-right:1px solid #3a3a3a;box-sizing:border-box"></div><div class="a" style="left:1786px;top:77px;width:42px;height:16px;background:#494949;border-right:1px solid #3a3a3a;box-sizing:border-box"></div><div class="a" style="left:1828px;top:77px;width:52px;height:17px;background:#535353"></div><span class="t" style="font-size:11.5px;top:79.2px;letter-spacing:-0.26px;left:1679.0px;font-weight:bold;color:#b2b2b2;">Histograr</span><span class="t" style="font-size:11.5px;top:79.2px;letter-spacing:-0.38px;left:1733.0px;font-weight:bold;color:#b2b2b2;">Navigator</span><span class="t" style="font-size:11.5px;top:79.2px;letter-spacing:-0.44px;left:1790.0px;font-weight:bold;color:#b2b2b2;">History</span><span class="t" style="font-size:11.5px;top:79.2px;letter-spacing:-0.69px;left:1835.0px;font-weight:bold;color:#f2f2f2;">Actions</span><svg style="left:1903px;top:82px;" width="11" height="8" viewBox="0 0 11 8"><path d="M0 .500h11M0 2.800h11M0 5.100h11M0 7.400h11" stroke="#cfcfcf" stroke-width="1"/></svg><div class="a" style="left:1729px;top:78px;width:1px;height:15px;background:#383838"></div><div class="a" style="left:1785px;top:78px;width:1px;height:15px;background:#383838"></div><div class="a" style="left:1827px;top:78px;width:1px;height:15px;background:#383838"></div><div class="a" style="left:1880px;top:78px;width:1px;height:15px;background:#383838"></div><div class="a" style="left:1672px;top:95px;width:232px;height:214px;overflow:hidden"><div class="a" style="left:0px;top:21.5px;width:232px;height:1px;background:#4a4a4a"></div><svg style="left:6px;top:8px;" width="10" height="8" viewBox="0 0 10 8"><path d="M1 4l2.800 3L9 1" fill="none" stroke="#ececec" stroke-width="1.700"/></svg><svg style="left:26.5px;top:6.5px;" width="11" height="11" viewBox="0 0 11 11"><rect x=".600" y=".600" width="9.800" height="9.800" fill="none" stroke="#e4e4e4" stroke-width="1.100"/><path d="M.600 2.800h9.800" stroke="#e4e4e4" stroke-width="1.100"/><path d="M3 6.300h5" stroke="#e4e4e4" stroke-width="1.200"/></svg><svg style="left:48px;top:9.5px;" width="9" height="6" viewBox="0 0 9 6"><path d="M.500.500L4.500 4.500 8.500.500" fill="none" stroke="#dcdcdc" stroke-width="1.100"/></svg><svg style="left:64px;top:7px;" width="14" height="11" viewBox="0 0 14 11"><path d="M0 1h5l1.200 1.500H14V11H0z" fill="#e4e4e4"/><path d="M1 4h12" stroke="#535353" stroke-width=".800"/></svg><span class="t" style="font-size:11.5px;top:6.7px;letter-spacing:-1.20px;left:86.0px;color:#e8e8e8;">EASYDODGE_CC</span><div class="a" style="left:77px;top:22.5px;width:155px;height:19px;background:#505050;border-top:1px solid #5c5c5c;border-bottom:1px solid #474747;box-sizing:border-box"></div><svg style="left:6px;top:28px;" width="10" height="8" viewBox="0 0 10 8"><path d="M1 4l2.800 3L9 1" fill="none" stroke="#ececec" stroke-width="1.700"/></svg><svg style="left:26.5px;top:26.5px;" width="11" height="11" viewBox="0 0 11 11"><rect x=".600" y=".600" width="9.800" height="9.800" fill="none" stroke="#e4e4e4" stroke-width="1.100"/><path d="M.600 2.800h9.800" stroke="#e4e4e4" stroke-width="1.100"/></svg><svg style="left:65px;top:27.5px;" width="5" height="9" viewBox="0 0 5 9"><path d="M.500.500L4 4.500.500 8.500" fill="none" stroke="#dcdcdc" stroke-width="1.100"/></svg><span class="t" style="font-size:11.5px;top:26.7px;letter-spacing:-0.69px;left:79.0px;color:#e8e8e8;">- DODGE &amp; BURN VIA LAYE...</span><div class="a" style="left:77px;top:42.5px;width:155px;height:19px;background:#505050;border-top:1px solid #5c5c5c;border-bottom:1px solid #474747;box-sizing:border-box"></div><svg style="left:6px;top:48px;" width="10" height="8" viewBox="0 0 10 8"><path d="M1 4l2.800 3L9 1" fill="none" stroke="#ececec" stroke-width="1.700"/></svg><svg style="left:26.5px;top:46.5px;" width="11" height="11" viewBox="0 0 11 11"><rect x=".600" y=".600" width="9.800" height="9.800" fill="none" stroke="#e4e4e4" stroke-width="1.100"/><path d="M.600 2.800h9.800" stroke="#e4e4e4" stroke-width="1.100"/><path d="M3 6.300h5" stroke="#e4e4e4" stroke-width="1.200"/></svg><svg style="left:65px;top:47.5px;" width="5" height="9" viewBox="0 0 5 9"><path d="M.500.500L4 4.500.500 8.500" fill="none" stroke="#dcdcdc" stroke-width="1.100"/></svg><span class="t" style="font-size:11.5px;top:46.7px;letter-spacing:-0.40px;left:79.0px;color:#e8e8e8;">Dodge &amp; Burn via 2 Curves ...</span><div class="a" style="left:77px;top:62.5px;width:155px;height:19px;background:#505050;border-top:1px solid #5c5c5c;border-bottom:1px solid #474747;box-sizing:border-box"></div><svg style="left:6px;top:68px;" width="10" height="8" viewBox="0 0 10 8"><path d="M1 4l2.800 3L9 1" fill="none" stroke="#ececec" stroke-width="1.700"/></svg><svg style="left:26.5px;top:66.5px;" width="11" height="11" viewBox="0 0 11 11"><rect x=".600" y=".600" width="9.800" height="9.800" fill="none" stroke="#e4e4e4" stroke-width="1.100"/><path d="M.600 2.800h9.800" stroke="#e4e4e4" stroke-width="1.100"/><path d="M3 6.300h5" stroke="#e4e4e4" stroke-width="1.200"/></svg><svg style="left:65px;top:67.5px;" width="5" height="9" viewBox="0 0 5 9"><path d="M.500.500L4 4.500.500 8.500" fill="none" stroke="#dcdcdc" stroke-width="1.100"/></svg><span class="t" style="font-size:11.5px;top:66.7px;letter-spacing:-0.36px;left:79.0px;color:#e8e8e8;">Dodge &amp; Burn via 1 Soft Lig...</span><div class="a" style="left:77px;top:82.5px;width:155px;height:19px;background:#505050;border-top:1px solid #5c5c5c;border-bottom:1px solid #474747;box-sizing:border-box"></div><svg style="left:6px;top:88px;" width="10" height="8" viewBox="0 0 10 8"><path d="M1 4l2.800 3L9 1" fill="none" stroke="#ececec" stroke-width="1.700"/></svg><svg style="left:26.5px;top:86.5px;" width="11" height="11" viewBox="0 0 11 11"><rect x=".600" y=".600" width="9.800" height="9.800" fill="none" stroke="#e4e4e4" stroke-width="1.100"/><path d="M.600 2.800h9.800" stroke="#e4e4e4" stroke-width="1.100"/></svg><svg style="left:65px;top:87.5px;" width="5" height="9" viewBox="0 0 5 9"><path d="M.500.500L4 4.500.500 8.500" fill="none" stroke="#dcdcdc" stroke-width="1.100"/></svg><span class="t" style="font-size:11.5px;top:86.7px;letter-spacing:-0.78px;left:79.0px;color:#e8e8e8;">- DODGE &amp; BURN (SELECTI...</span><div class="a" style="left:77px;top:102.5px;width:155px;height:19px;background:#505050;border-top:1px solid #5c5c5c;border-bottom:1px solid #474747;box-sizing:border-box"></div><svg style="left:6px;top:108px;" width="10" height="8" viewBox="0 0 10 8"><path d="M1 4l2.800 3L9 1" fill="none" stroke="#ececec" stroke-width="1.700"/></svg><div class="a" style="left:26.5px;top:106.5px;width:11px;height:11px;background:#4d4d4d;border:1px solid #484848;box-sizing:border-box"></div><svg style="left:65px;top:107.5px;" width="5" height="9" viewBox="0 0 5 9"><path d="M.500.500L4 4.500.500 8.500" fill="none" stroke="#dcdcdc" stroke-width="1.100"/></svg><span class="t" style="font-size:11.5px;top:106.7px;letter-spacing:-0.38px;left:79.0px;color:#e8e8e8;">Darken-5px</span><div class="a" style="left:77px;top:122.5px;width:155px;height:19px;background:#505050;border-top:1px solid #5c5c5c;border-bottom:1px solid #474747;box-sizing:border-box"></div><svg style="left:6px;top:128px;" width="10" height="8" viewBox="0 0 10 8"><path d="M1 4l2.800 3L9 1" fill="none" stroke="#ececec" stroke-width="1.700"/></svg><div class="a" style="left:26.5px;top:126.5px;width:11px;height:11px;background:#4d4d4d;border:1px solid #484848;box-sizing:border-box"></div><svg style="left:65px;top:127.5px;" width="5" height="9" viewBox="0 0 5 9"><path d="M.500.500L4 4.500.500 8.500" fill="none" stroke="#dcdcdc" stroke-width="1.100"/></svg><span class="t" style="font-size:11.5px;top:126.7px;letter-spacing:-0.38px;left:79.0px;color:#e8e8e8;">Darken-25px</span><div class="a" style="left:77px;top:142.5px;width:155px;height:19px;background:#505050;border-top:1px solid #5c5c5c;border-bottom:1px solid #474747;box-sizing:border-box"></div><svg style="left:6px;top:148px;" width="10" height="8" viewBox="0 0 10 8"><path d="M1 4l2.800 3L9 1" fill="none" stroke="#ececec" stroke-width="1.700"/></svg><div class="a" style="left:26.5px;top:146.5px;width:11px;height:11px;background:#4d4d4d;border:1px solid #484848;box-sizing:border-box"></div><svg style="left:65px;top:147.5px;" width="5" height="9" viewBox="0 0 5 9"><path d="M.500.500L4 4.500.500 8.500" fill="none" stroke="#dcdcdc" stroke-width="1.100"/></svg><span class="t" style="font-size:11.5px;top:146.7px;letter-spacing:-0.38px;left:79.0px;color:#e8e8e8;">Darken-75px</span><div class="a" style="left:77px;top:162.5px;width:155px;height:19px;background:#505050;border-top:1px solid #5c5c5c;border-bottom:1px solid #474747;box-sizing:border-box"></div><svg style="left:6px;top:168px;" width="10" height="8" viewBox="0 0 10 8"><path d="M1 4l2.800 3L9 1" fill="none" stroke="#ececec" stroke-width="1.700"/></svg><div class="a" style="left:26.5px;top:166.5px;width:11px;height:11px;background:#4d4d4d;border:1px solid #484848;box-sizing:border-box"></div><svg style="left:65px;top:167.5px;" width="5" height="9" viewBox="0 0 5 9"><path d="M.500.500L4 4.500.500 8.500" fill="none" stroke="#dcdcdc" stroke-width="1.100"/></svg><span class="t" style="font-size:11.5px;top:166.7px;letter-spacing:-0.34px;left:79.0px;color:#e8e8e8;">Darken-250px</span><div class="a" style="left:77px;top:182.5px;width:155px;height:19px;background:#505050;border-top:1px solid #5c5c5c;border-bottom:1px solid #474747;box-sizing:border-box"></div><svg style="left:6px;top:188px;" width="10" height="8" viewBox="0 0 10 8"><path d="M1 4l2.800 3L9 1" fill="none" stroke="#ececec" stroke-width="1.700"/></svg><div class="a" style="left:26.5px;top:186.5px;width:11px;height:11px;background:#4d4d4d;border:1px solid #484848;box-sizing:border-box"></div><svg style="left:65px;top:187.5px;" width="5" height="9" viewBox="0 0 5 9"><path d="M.500.500L4 4.500.500 8.500" fill="none" stroke="#dcdcdc" stroke-width="1.100"/></svg><span class="t" style="font-size:11.5px;top:186.7px;letter-spacing:-0.21px;left:79.0px;color:#e8e8e8;">Lighten-5px</span><div class="a" style="left:77px;top:202.5px;width:155px;height:19px;background:#505050;border-top:1px solid #5c5c5c;border-bottom:1px solid #474747;box-sizing:border-box"></div><svg style="left:6px;top:208px;" width="10" height="8" viewBox="0 0 10 8"><path d="M1 4l2.800 3L9 1" fill="none" stroke="#ececec" stroke-width="1.700"/></svg><div class="a" style="left:26.5px;top:206.5px;width:11px;height:11px;background:#4d4d4d;border:1px solid #484848;box-sizing:border-box"></div><svg style="left:65px;top:207.5px;" width="5" height="9" viewBox="0 0 5 9"><path d="M.500.500L4 4.500.500 8.500" fill="none" stroke="#dcdcdc" stroke-width="1.100"/></svg><span class="t" style="font-size:11.5px;top:206.7px;letter-spacing:-0.23px;left:79.0px;color:#e8e8e8;">Lighten-25px</span></div><div class="a" style="left:1693px;top:95px;width:1px;height:214px;background:#494949"></div><div class="a" style="left:1904px;top:94px;width:16px;height:216px;background:#4a4a4a"></div><div class="a" style="left:1906px;top:99px;width:9px;height:20px;background:#6c6c6c;border-radius:4.500px"></div><div class="a" style="left:1672px;top:309px;width:248px;height:1px;background:#444"></div><div class="a" style="left:1733px;top:318px;width:7px;height:7px;background:#8a8a8a"></div><div class="a" style="left:1762px;top:317px;width:9px;height:9px;background:#8a8a8a;border-radius:50%"></div><svg style="left:1792px;top:316px;" width="9" height="10" viewBox="0 0 9 10"><path d="M0 0l9 5-9 5z" fill="#8a8a8a"/></svg><svg style="left:1817px;top:317px;" width="14" height="11" viewBox="0 0 14 11"><path d="M0 1.500h5l1.200 1.500H14V11H0z" fill="#d2d2d2"/></svg><svg style="left:1850px;top:316px;" width="12" height="12" viewBox="0 0 12 12"><rect x=".600" y=".600" width="10.800" height="10.800" fill="none" stroke="#d2d2d2" stroke-width="1.200"/><path d="M6 3v6M3 6h6" stroke="#d2d2d2" stroke-width="1.200"/></svg><svg style="left:1879px;top:315px;" width="11" height="14" viewBox="0 0 11 14"><path d="M0 2.500h11M3.500 2.500V.700h4v1.800" fill="none" stroke="#8a8a8a" stroke-width="1.100"/><path d="M1.200 4h8.600l-.600 9.300H1.800z" fill="none" stroke="#8a8a8a" stroke-width="1.100"/><path d="M4 5.500v6.500M5.500 5.500v6.500M7 5.500v6.500" stroke="#8a8a8a" stroke-width=".800"/></svg><div class="a" style="left:1672px;top:332px;width:248px;height:2px;background:#383838"></div><div class="a" style="left:1672px;top:334px;width:248px;height:18px;background:#424242;border-bottom:1px solid #383838;box-sizing:border-box"></div><div class="a" style="left:1736px;top:334px;width:68px;height:17px;background:#494949;border-right:1px solid #3a3a3a;box-sizing:border-box"></div><div class="a" style="left:1672px;top:334px;width:64px;height:18px;background:#535353"></div><span class="t" style="font-size:11.5px;top:336.7px;letter-spacing:-0.46px;left:1678.0px;font-weight:bold;color:#f2f2f2;">Character</span><span class="t" style="font-size:11.5px;top:336.7px;letter-spacing:-0.61px;left:1743.0px;font-weight:bold;color:#b2b2b2;">Paragraph</span><svg style="left:1903px;top:339px;" width="11" height="8" viewBox="0 0 11 8"><path d="M0 .500h11M0 2.800h11M0 5.100h11M0 7.400h11" stroke="#cfcfcf" stroke-width="1"/></svg><div class="a" style="left:1736px;top:335px;width:1px;height:16px;background:#383838"></div><div class="a" style="left:1803px;top:335px;width:1px;height:16px;background:#383838"></div><div class="dd" style="left:1676px;top:366px;width:125px;height:17px;"></div><div class="a" style="left:1786px;top:367px;width:1px;height:15px;background:#5e5e5e"></div><span class="t" style="font-size:11.5px;top:369.3px;letter-spacing:-0.40px;left:1680.0px;color:#ececec;">Myriad Pro</span><svg style="left:1790px;top:373.0px;" width="7" height="4" viewBox="0 0 7 4"><path d="M0 0l3.500 3.500L7 0" fill="none" stroke="#d0d0d0" stroke-width="1.300"/></svg><div class="dd" style="left:1810px;top:366px;width:81px;height:17px;"></div><div class="a" style="left:1876px;top:367px;width:1px;height:15px;background:#5e5e5e"></div><span class="t" style="font-size:11.5px;top:369.3px;letter-spacing:-0.51px;left:1814.0px;color:#ececec;">Bold</span><svg style="left:1880px;top:373.0px;" width="7" height="4" viewBox="0 0 7 4"><path d="M0 0l3.500 3.500L7 0" fill="none" stroke="#d0d0d0" stroke-width="1.300"/></svg><span class="t" style="font-size:8px;top:398.1px;left:1675.0px;color:#d2d2d2;font-family:'Liberation Serif',serif;">T</span><span class="t" style="font-size:14.5px;top:392.5px;left:1681.0px;color:#d2d2d2;font-family:'Liberation Serif',serif;">T</span><div class="dd" style="left:1697px;top:391px;width:84px;height:17px;"></div><div class="a" style="left:1766px;top:392px;width:1px;height:15px;background:#5e5e5e"></div><span class="t" style="font-size:11.5px;top:394.3px;letter-spacing:-0.14px;left:1701.0px;color:#ececec;">75 pt</span><svg style="left:1770px;top:398.0px;" width="7" height="4" viewBox="0 0 7 4"><path d="M0 0l3.500 3.500L7 0" fill="none" stroke="#d0d0d0" stroke-width="1.300"/></svg><svg style="left:1793px;top:390px;" width="17" height="18" viewBox="0 0 17 18"><path d="M2.500 6v11M.500 8l2-2.500L4.500 8M.500 15l2 2.500L4.500 15" fill="none" stroke="#d2d2d2" stroke-width="1"/></svg><span class="t" style="font-size:8.5px;top:390.4px;left:1799.0px;color:#d2d2d2;">A</span><span class="t" style="font-size:8.5px;top:400.4px;left:1799.0px;color:#d2d2d2;">A</span><div class="a" style="left:1796px;top:399px;width:13px;height:1px;background:#d2d2d2"></div><div class="dd" style="left:1814px;top:391px;width:77px;height:17px;"></div><div class="a" style="left:1876px;top:392px;width:1px;height:15px;background:#5e5e5e"></div><span class="t" style="font-size:11.5px;top:394.3px;letter-spacing:-0.26px;left:1818.0px;color:#ececec;">(Auto)</span><svg style="left:1880px;top:398.0px;" width="7" height="4" viewBox="0 0 7 4"><path d="M0 0l3.500 3.500L7 0" fill="none" stroke="#d0d0d0" stroke-width="1.300"/></svg><span class="t" style="font-size:12px;top:411.7px;letter-spacing:-0.67px;left:1675.5px;color:#d2d2d2;">V/A</span><svg style="left:1684px;top:424px;" width="9" height="5" viewBox="0 0 9 5"><path d="M9 2.500H1.500M3.500.500l-2.500 2 2.500 2" fill="none" stroke="#d2d2d2" stroke-width="1"/></svg><div class="dd" style="left:1697px;top:412px;width:84px;height:17px;"></div><div class="a" style="left:1766px;top:413px;width:1px;height:15px;background:#5e5e5e"></div><span class="t" style="font-size:11.5px;top:415.3px;letter-spacing:-0.18px;left:1701.0px;color:#ececec;">Metrics</span><svg style="left:1770px;top:419.0px;" width="7" height="4" viewBox="0 0 7 4"><path d="M0 0l3.500 3.500L7 0" fill="none" stroke="#d0d0d0" stroke-width="1.300"/></svg><div class="a" style="left:1793px;top:412px;width:18px;height:11px;background:#d2d2d2;border-radius:1px"></div><span class="t" style="font-size:10.5px;top:412.6px;letter-spacing:1.19px;left:1794.0px;font-weight:bold;color:#535353;">VA</span><svg style="left:1793px;top:424px;" width="18" height="5" viewBox="0 0 18 5"><path d="M1 2.500h16M3 .500l-2.500 2 2.500 2M15 .500l2.500 2-2.500 2" fill="none" stroke="#d2d2d2" stroke-width="1"/></svg><div class="dd" style="left:1814px;top:412px;width:77px;height:17px;"></div><div class="a" style="left:1876px;top:413px;width:1px;height:15px;background:#5e5e5e"></div><span class="t" style="font-size:11.5px;top:415.3px;left:1818.0px;color:#ececec;">0</span><svg style="left:1880px;top:419.0px;" width="7" height="4" viewBox="0 0 7 4"><path d="M0 0l3.500 3.500L7 0" fill="none" stroke="#d0d0d0" stroke-width="1.300"/></svg><svg style="left:1676px;top:434px;" width="5" height="15" viewBox="0 0 5 15"><path d="M2.500 1v13M.500 3.500l2-2.500 2 2.500M.500 11.500l2 2.500 2-2.500" fill="none" stroke="#d2d2d2" stroke-width="1"/></svg><span class="t" style="font-size:15.5px;top:434.0px;left:1682.0px;color:#d2d2d2;font-family:'Liberation Serif',serif;">T</span><div class="fld" style="left:1697px;top:433px;width:55px;height:17px;border-radius:2px"></div><span class="t" style="font-size:11.5px;top:436.0px;letter-spacing:-0.80px;left:1700.0px;color:#ececec;">100%</span><span class="t" style="font-size:14px;top:432.8px;left:1819.5px;font-weight:bold;color:#d2d2d2;font-family:'Liberation Serif',serif;">T</span><svg style="left:1816px;top:446px;" width="18" height="5" viewBox="0 0 18 5"><path d="M1 2.500h16M3 .500l-2.500 2 2.500 2M15 .500l2.500 2-2.500 2" fill="none" stroke="#d2d2d2" stroke-width="1"/></svg><div class="fld" style="left:1837px;top:433px;width:55px;height:17px;border-radius:2px"></div><span class="t" style="font-size:11.5px;top:436.0px;letter-spacing:-0.80px;left:1840.0px;color:#ececec;">100%</span><span class="t" style="font-size:12px;top:454.7px;left:1676.0px;color:#d2d2d2;">A</span><span class="t" style="font-size:9px;top:453.7px;left:1684.0px;color:#d2d2d2;">a</span><div class="a" style="left:1676px;top:466px;width:7px;height:1px;background:#d2d2d2"></div><svg style="left:1685px;top:462px;" width="5" height="9" viewBox="0 0 5 9"><path d="M2.500 9V1M.500 3l2-2.500 2 2.500" fill="none" stroke="#d2d2d2" stroke-width="1"/></svg><div class="fld" style="left:1698px;top:454px;width:55px;height:17px;border-radius:2px"></div><span class="t" style="font-size:11.5px;top:456.8px;letter-spacing:0.11px;left:1701.0px;color:#ececec;">0 pt</span><span class="t" style="font-size:11.5px;top:456.5px;letter-spacing:-0.43px;left:1803.0px;color:#d8d8d8;">Color:</span><div class="a" style="left:1836px;top:453px;width:56px;height:19px;background:#000;border:1px solid #3a3a3a;box-sizing:border-box"></div><span class="t" style="font-size:15px;top:479.3px;left:1695.4px;font-weight:bold;color:#d2d2d2;font-family:'Liberation Serif',serif;">T</span><span class="t" style="font-size:15px;top:479.3px;left:1718.9px;color:#d2d2d2;font-family:'Liberation Serif',serif;font-style:italic;">T</span><span class="t" style="font-size:15px;top:479.3px;left:1737.8px;color:#d2d2d2;font-family:'Liberation Serif',serif;">TT</span><span class="t" style="font-size:15px;top:479.3px;left:1763.9px;color:#d2d2d2;font-family:'Liberation Serif',serif;">T</span><span class="t" style="font-size:10.5px;top:482.9px;left:1772.8px;color:#d2d2d2;font-family:'Liberation Serif',serif;">T</span><span class="t" style="font-size:15px;top:479.3px;left:1788.4px;color:#d2d2d2;font-family:'Liberation Serif',serif;">T</span><span class="t" style="font-size:7.5px;top:478.9px;left:1799.4px;color:#d2d2d2;font-family:'Liberation Serif',serif;">1</span><span class="t" style="font-size:15px;top:479.3px;left:1813.4px;color:#d2d2d2;font-family:'Liberation Serif',serif;">T</span><span class="t" style="font-size:7.5px;top:486.9px;left:1823.9px;color:#d2d2d2;font-family:'Liberation Serif',serif;">1</span><span class="t" style="font-size:15px;top:478.8px;left:1838.9px;color:#d2d2d2;font-family:'Liberation Serif',serif;">T</span><div class="a" style="left:1838px;top:493px;width:11px;height:1px;background:#d2d2d2"></div><span class="t" style="font-size:15px;top:479.3px;left:1863.4px;color:#d2d2d2;font-family:'Liberation Serif',serif;">T</span><div class="a" style="left:1862px;top:486px;width:12px;height:1.2px;background:#d2d2d2"></div><div class="a" style="left:1689px;top:503px;width:22px;height:22px;background:#383838;border:1px solid #5e5e5e;border-radius:3px;box-sizing:border-box"></div><span class="t" style="font-size:16px;top:505.8px;left:1696.0px;color:#ececec;font-family:'Liberation Serif',serif;">fi</span><span class="t" style="font-size:15px;top:508.3px;left:1720.3px;color:#8c8c8c;font-family:'Liberation Serif',serif;font-style:italic;">o</span><span class="t" style="font-size:15px;top:507.3px;left:1741.2px;color:#8c8c8c;font-family:'Liberation Serif',serif;">st</span><span class="t" style="font-size:16px;top:506.8px;left:1766.7px;color:#8c8c8c;font-family:'Liberation Serif',serif;font-style:italic;">A</span><span class="t" style="font-size:14px;top:509.3px;left:1787.7px;color:#d2d2d2;font-family:'Liberation Serif',serif;">aa</span><svg style="left:1788px;top:506px;" width="15" height="4" viewBox="0 0 15 4"><path d="M0 2h14M11.500 0l2.500 2-2.500 2" fill="none" stroke="#d2d2d2" stroke-width="1"/></svg><span class="t" style="font-size:16px;top:506.8px;left:1815.1px;color:#8c8c8c;font-family:'Liberation Serif',serif;font-style:italic;">T</span><span class="t" style="font-size:16px;top:506.8px;left:1835.6px;color:#d2d2d2;font-family:'Liberation Serif',serif;">1</span><span class="t" style="font-size:10px;top:506.7px;left:1845.1px;color:#d2d2d2;font-family:'Liberation Serif',serif;">st</span><span class="t" style="font-size:16px;top:506.8px;left:1861.3px;color:#d2d2d2;font-family:'Liberation Serif',serif;">½</span><div class="dd" style="left:1676px;top:531px;width:125px;height:17px;"></div><span class="t" style="font-size:11.5px;top:534.3px;letter-spacing:-0.61px;left:1684.0px;color:#ececec;">English: USA</span><svg style="left:1790px;top:538.0px;" width="7" height="4" viewBox="0 0 7 4"><path d="M0 0l3.500 3.500L7 0" fill="none" stroke="#d0d0d0" stroke-width="1.300"/></svg><span class="t" style="font-size:9px;top:532.7px;left:1805.0px;color:#d2d2d2;">a</span><span class="t" style="font-size:12px;top:534.7px;left:1810.0px;color:#d2d2d2;">a</span><div class="dd" style="left:1824px;top:531px;width:68px;height:17px;"></div><span class="t" style="font-size:11.5px;top:534.3px;letter-spacing:-0.55px;left:1832.0px;color:#ececec;">Sharp</span><svg style="left:1881px;top:538.0px;" width="7" height="4" viewBox="0 0 7 4"><path d="M0 0l3.500 3.500L7 0" fill="none" stroke="#d0d0d0" stroke-width="1.300"/></svg><div class="a" style="left:1672px;top:553px;width:248px;height:2px;background:#383838"></div><div class="a" style="left:1672px;top:555px;width:248px;height:17px;background:#424242;border-bottom:1px solid #383838;box-sizing:border-box"></div><div class="a" style="left:1672px;top:555px;width:80px;height:16px;background:#494949;border-right:1px solid #3a3a3a;box-sizing:border-box"></div><div class="a" style="left:1752px;top:555px;width:60px;height:16px;background:#494949;border-right:1px solid #3a3a3a;box-sizing:border-box"></div><div class="a" style="left:1812px;top:555px;width:48px;height:17px;background:#535353"></div><span class="t" style="font-size:11.5px;top:557.2px;letter-spacing:-0.36px;left:1678.0px;font-weight:bold;color:#b2b2b2;">Adjustments</span><span class="t" style="font-size:11.5px;top:557.2px;letter-spacing:-0.32px;left:1758.0px;font-weight:bold;color:#b2b2b2;">Libraries</span><span class="t" style="font-size:11.5px;top:557.2px;letter-spacing:-0.82px;left:1819.0px;font-weight:bold;color:#f2f2f2;">Layers</span><svg style="left:1903px;top:560px;" width="11" height="8" viewBox="0 0 11 8"><path d="M0 .500h11M0 2.800h11M0 5.100h11M0 7.400h11" stroke="#cfcfcf" stroke-width="1"/></svg><div class="a" style="left:1751px;top:556px;width:1px;height:15px;background:#383838"></div><div class="a" style="left:1811px;top:556px;width:1px;height:15px;background:#383838"></div><div class="a" style="left:1860px;top:556px;width:1px;height:15px;background:#383838"></div><div class="dd" style="left:1676px;top:583px;width:87px;height:17px;background:#4b4b4b;border-color:#5c5c5c"></div><svg style="left:1684px;top:586px;" width="11" height="11" viewBox="0 0 11 11"><circle cx="4.300" cy="4.300" r="3.300" fill="none" stroke="#bdbdbd" stroke-width="1.500"/><path d="M6.800 6.800l3.200 3.200" stroke="#bdbdbd" stroke-width="1.800"/></svg><span class="t" style="font-size:11.5px;top:586.0px;letter-spacing:-0.84px;left:1697.0px;color:#9a9a9a;">Kind</span><svg style="left:1752px;top:590px;" width="7" height="4" viewBox="0 0 7 4"><path d="M0 0l3.500 3.500L7 0" fill="none" stroke="#777" stroke-width="1.300"/></svg><svg style="left:1775px;top:586px;" width="12" height="10" viewBox="0 0 12 10"><rect x=".500" y=".500" width="11" height="9" fill="none" stroke="#b4b4b4" stroke-width="1"/><path d="M2 8l2.500-3.500 2 2L8 5l2 3z" fill="#b4b4b4"/></svg><svg style="left:1800px;top:586px;" width="11" height="11" viewBox="0 0 11 11"><circle cx="5.500" cy="5.500" r="5" fill="none" stroke="#b4b4b4" stroke-width="1"/><path d="M2 9A5 5 0 0 0 9 2z" fill="#b4b4b4"/></svg><span class="t" style="font-size:14px;top:584.8px;left:1825.2px;font-weight:bold;color:#b4b4b4;font-family:'Liberation Serif',serif;">T</span><svg style="left:1848px;top:586px;" width="12" height="11" viewBox="0 0 12 11"><rect x="1.500" y="1.500" width="9" height="8" fill="none" stroke="#b4b4b4" stroke-width="1"/><path d="M0 0h3v3H0zM9 0h3v3H9zM0 8h3v3H0zM9 8h3v3H9z" fill="#b4b4b4"/></svg><svg style="left:1873px;top:585px;" width="10" height="12" viewBox="0 0 10 12"><path d="M3 .500h4l2.500 2.500V9H3z" fill="none" stroke="#b4b4b4" stroke-width="1"/><path d="M.500 6h5v5.500h-5z" fill="#b4b4b4"/></svg><div class="a" style="left:1896px;top:582px;width:8px;height:17px;border:1px solid #474747;border-radius:4px;box-sizing:border-box;background:#4e4e4e"></div><div class="a" style="left:1896px;top:582px;width:8px;height:8px;background:#9a9a9a;border-radius:50%"></div><div class="a" style="left:1672px;top:605px;width:248px;height:1px;background:#484848"></div><div class="dd" style="left:1676px;top:611px;width:129px;height:17px;background:#4f4f4f;border-color:#5b5b5b"></div><span class="t" style="font-size:11.5px;top:614.0px;letter-spacing:-0.51px;left:1683.0px;color:#8a8a8a;">Normal</span><svg style="left:1795px;top:618px;" width="7" height="4" viewBox="0 0 7 4"><path d="M0 0l3.500 3.500L7 0" fill="none" stroke="#777" stroke-width="1.300"/></svg><span class="t" style="font-size:11.5px;top:613.0px;letter-spacing:-0.45px;left:1809.0px;color:#8f8f8f;">Opacity:</span><div class="dd" style="left:1852px;top:611px;width:51px;height:17px;background:#4f4f4f;border-color:#5b5b5b"></div><div class="a" style="left:1888px;top:612px;width:1px;height:15px;background:#5b5b5b"></div><span class="t" style="font-size:11.5px;top:614.3px;letter-spacing:-0.80px;left:1856.0px;color:#6e6e6e;">100%</span><svg style="left:1892px;top:618px;" width="7" height="4" viewBox="0 0 7 4"><path d="M0 0l3.500 3.500L7 0" fill="none" stroke="#777" stroke-width="1.300"/></svg><div class="a" style="left:1672px;top:633px;width:248px;height:1px;background:#484848"></div><span class="t" style="font-size:11.5px;top:641.0px;letter-spacing:-0.62px;left:1677.0px;color:#8f8f8f;">Lock:</span><div class="a" style="left:1709px;top:641px;width:11px;height:11px;border:1px solid #9c9c9c;box-sizing:border-box;background:repeating-conic-gradient(#9c9c9c 0 25%,#535353 0 50%) 0 0/6px 6px"></div><svg style="left:1730px;top:640px;" width="13" height="13" viewBox="0 0 13 13"><path d="M12.500.500c.500.400.500 1 .200 1.500L7 8.500 5 7z" fill="#9c9c9c"/><path d="M4.300 7.800l2 1.600c-.400 2-2.300 3.500-5.800 3 1.500-.800 1.500-2 2-3 .400-.900 1-1.400 1.800-1.600z" fill="#9c9c9c"/></svg><svg style="left:1752px;top:640px;" width="13" height="13" viewBox="0 0 13 13"><path d="M6.500 1v11M1 6.500h11" stroke="#9c9c9c" stroke-width="1.100"/><path d="M6.500 0l2 2.500h-4zM6.500 13l2-2.500h-4zM0 6.500l2.500-2v4zM13 6.500l-2.500-2v4z" fill="#9c9c9c"/></svg><svg style="left:1774px;top:640px;" width="14" height="14" viewBox="0 0 14 14"><path d="M3.500 0v10.500H14M0 3.500h10.500V14" fill="none" stroke="#9c9c9c" stroke-width="1.100"/><path d="M9 2l3-2M12 5l2-2" stroke="#9c9c9c" stroke-width="1"/></svg><svg style="left:1798px;top:640px;" width="10" height="13" viewBox="0 0 10 13"><path d="M2.200 6V3.800a2.800 2.800 0 0 1 5.600 0V6" fill="none" stroke="#9c9c9c" stroke-width="1.300"/><rect x="0" y="5.500" width="10" height="7" rx="1" fill="#9c9c9c"/></svg><span class="t" style="font-size:11.5px;top:640.0px;letter-spacing:-0.47px;left:1833.0px;color:#8f8f8f;">Fill:</span><div class="dd" style="left:1852px;top:638px;width:51px;height:17px;background:#4f4f4f;border-color:#5b5b5b"></div><div class="a" style="left:1888px;top:639px;width:1px;height:15px;background:#5b5b5b"></div><span class="t" style="font-size:11.5px;top:641.3px;letter-spacing:-0.80px;left:1856.0px;color:#6e6e6e;">100%</span><svg style="left:1892px;top:645px;" width="7" height="4" viewBox="0 0 7 4"><path d="M0 0l3.500 3.500L7 0" fill="none" stroke="#777" stroke-width="1.300"/></svg><div class="a" style="left:1672px;top:661px;width:248px;height:1px;background:#484848"></div><div class="a" style="left:1672px;top:662px;width:232px;height:124px;background:#4e4e4e"></div><div class="a" style="left:1672px;top:663px;width:31px;height:55px;background:#535353"></div><div class="a" style="left:1703px;top:663px;width:201px;height:55px;background:#6c6c6c"></div><div class="a" style="left:1672px;top:718px;width:232px;height:1px;background:#474747"></div><svg style="left:1680px;top:686.5px;" width="15" height="9" viewBox="0 0 15 9"><path d="M0 4.500C3 .300 12 .300 15 4.500 12 8.700 3 8.700 0 4.500z" fill="#e4e4e4"/><circle cx="7.500" cy="4.500" r="2.500" fill="#535353"/><circle cx="8.300" cy="3.600" r=".900" fill="#e4e4e4"/></svg><div class="a" style="left:1706px;top:668px;width:80px;height:46px;background:#fff;border:1px solid #111;outline:1px solid #e8e8e8;outline-offset:-2px;box-sizing:border-box"></div><span class="t" style="font-size:12px;top:676.7px;letter-spacing:-0.00px;left:1716.0px;font-weight:bold;color:#000;">PRETTIGE</span><span class="t" style="font-size:12px;top:693.2px;letter-spacing:-0.19px;left:1717.0px;font-weight:bold;color:#000;">FEESTEN!</span><span class="t" style="font-size:11.5px;top:685.0px;letter-spacing:-0.49px;left:1794.0px;color:#f0f0f0;">Background</span><svg style="left:1877px;top:684px;" width="10" height="13" viewBox="0 0 10 13"><path d="M2.300 6V3.800a2.700 2.700 0 0 1 5.400 0V6" fill="none" stroke="#e2e2e2" stroke-width="1.200"/><rect x=".600" y="5.600" width="8.800" height="6.800" rx=".800" fill="none" stroke="#e2e2e2" stroke-width="1.200"/><path d="M5 8v2" stroke="#e2e2e2" stroke-width="1.200"/></svg><div class="a" style="left:1904px;top:662px;width:16px;height:124px;background:#4a4a4a"></div><div class="a" style="left:1672px;top:786px;width:248px;height:1px;background:#444"></div><svg style="left:1716px;top:795px;" width="15" height="8" viewBox="0 0 15 8"><rect x=".700" y=".700" width="7.500" height="6.600" rx="3.300" fill="none" stroke="#8c8c8c" stroke-width="1.300"/><rect x="6.800" y=".700" width="7.500" height="6.600" rx="3.300" fill="none" stroke="#8c8c8c" stroke-width="1.300"/><path d="M4.500 4h6" stroke="#8c8c8c" stroke-width="1.300"/></svg><span class="t" style="font-size:13px;top:792.7px;left:1746.0px;color:#8c8c8c;font-style:italic;">fx</span><svg style="left:1771px;top:793px;" width="13" height="10" viewBox="0 0 13 10"><rect width="13" height="10" rx="1" fill="#d2d2d2"/><circle cx="6.500" cy="5" r="2.800" fill="#535353"/></svg><svg style="left:1800px;top:794px;" width="11" height="11" viewBox="0 0 11 11"><circle cx="5.500" cy="5.500" r="5" fill="none" stroke="#d2d2d2" stroke-width="1"/><path d="M2 9A5 5 0 0 0 9 2z" fill="#d2d2d2"/></svg><svg style="left:1810px;top:805px;" width="4" height="3" viewBox="0 0 4 3"><path d="M0 0h4L2 2.500z" fill="#d2d2d2"/></svg><svg style="left:1825px;top:794px;" width="14" height="11" viewBox="0 0 14 11"><path d="M0 1.500h5l1.200 1.500H14V11H0z" fill="#d2d2d2"/></svg><svg style="left:1853px;top:793px;" width="12" height="12" viewBox="0 0 12 12"><rect x=".600" y=".600" width="10.800" height="10.800" fill="none" stroke="#d2d2d2" stroke-width="1.200"/><path d="M6 3v6M3 6h6" stroke="#d2d2d2" stroke-width="1.200"/></svg><svg style="left:1880px;top:792px;" width="11" height="14" viewBox="0 0 11 14"><path d="M0 2.500h11M3.500 2.500V.700h4v1.800" fill="none" stroke="#8a8a8a" stroke-width="1.100"/><path d="M1.200 4h8.600l-.600 9.300H1.800z" fill="none" stroke="#8a8a8a" stroke-width="1.100"/><path d="M4 5.500v6.500M5.500 5.500v6.500M7 5.500v6.500" stroke="#8a8a8a" stroke-width=".800"/></svg><div class="a" style="left:1672px;top:811px;width:248px;height:2px;background:#383838"></div><div class="a" style="left:1672px;top:813px;width:248px;height:18px;background:#424242;border-bottom:1px solid #383838;box-sizing:border-box"></div><div class="a" style="left:1733px;top:813px;width:43px;height:17px;background:#494949;border-right:1px solid #3a3a3a;box-sizing:border-box"></div><div class="a" style="left:1672px;top:813px;width:61px;height:18px;background:#535353"></div><span class="t" style="font-size:11.5px;top:815.7px;letter-spacing:-0.54px;left:1678.0px;font-weight:bold;color:#f2f2f2;">Channels</span><span class="t" style="font-size:11.5px;top:815.7px;letter-spacing:-0.83px;left:1740.0px;font-weight:bold;color:#b2b2b2;">Paths</span><svg style="left:1903px;top:818px;" width="11" height="8" viewBox="0 0 11 8"><path d="M0 .500h11M0 2.800h11M0 5.100h11M0 7.400h11" stroke="#cfcfcf" stroke-width="1"/></svg><div class="a" style="left:1733px;top:814px;width:1px;height:16px;background:#383838"></div><div class="a" style="left:1775px;top:814px;width:1px;height:16px;background:#383838"></div><div class="a" style="left:1672px;top:836px;width:232px;height:211px;background:#4e4e4e"></div><div class="a" style="left:1672px;top:836px;width:231px;height:24px;background:#6c6c6c;border-bottom:1px solid #555;box-sizing:border-box"></div><svg style="left:1677px;top:843.5px;" width="15" height="9" viewBox="0 0 15 9"><path d="M0 4.500C3 .300 12 .300 15 4.500 12 8.700 3 8.700 0 4.500z" fill="#e4e4e4"/><circle cx="7.500" cy="4.500" r="2.500" fill="#6c6c6c"/><circle cx="8.300" cy="3.600" r=".900" fill="#e4e4e4"/></svg><div class="a" style="left:1697px;top:837px;width:33px;height:21px;background:#fff;border:2px solid #3a3a3a;box-sizing:border-box"></div><span class="t" style="font-size:4.8px;top:842.2px;left:1701.5px;font-weight:bold;color:#000;">PRETTIGE</span><span class="t" style="font-size:4.8px;top:848.2px;left:1701.1px;font-weight:bold;color:#000;">FEESTEN!</span><span class="t" style="font-size:12px;top:840.7px;letter-spacing:-1.20px;left:1733.0px;color:#f0f0f0;">RGB</span><span class="t" style="font-size:11.5px;top:841.0px;letter-spacing:-1.02px;left:1878.5px;color:#f0f0f0;font-family:'Liberation Sans','DejaVu Sans',sans-serif;">⌘2</span><div class="a" style="left:1672px;top:860px;width:231px;height:24px;background:#6c6c6c;border-bottom:1px solid #555;box-sizing:border-box"></div><svg style="left:1677px;top:867.5px;" width="15" height="9" viewBox="0 0 15 9"><path d="M0 4.500C3 .300 12 .300 15 4.500 12 8.700 3 8.700 0 4.500z" fill="#e4e4e4"/><circle cx="7.500" cy="4.500" r="2.500" fill="#6c6c6c"/><circle cx="8.300" cy="3.600" r=".900" fill="#e4e4e4"/></svg><div class="a" style="left:1697px;top:861px;width:33px;height:21px;background:#fff;border:2px solid #3a3a3a;box-sizing:border-box"></div><span class="t" style="font-size:4.8px;top:866.2px;left:1701.5px;font-weight:bold;color:#000;">PRETTIGE</span><span class="t" style="font-size:4.8px;top:872.2px;left:1701.1px;font-weight:bold;color:#000;">FEESTEN!</span><span class="t" style="font-size:12px;top:864.7px;letter-spacing:-1.20px;left:1733.0px;color:#f0f0f0;">Red</span><span class="t" style="font-size:11.5px;top:865.0px;letter-spacing:-1.02px;left:1878.5px;color:#f0f0f0;font-family:'Liberation Sans','DejaVu Sans',sans-serif;">⌘3</span><div class="a" style="left:1672px;top:884px;width:231px;height:24px;background:#6c6c6c;border-bottom:1px solid #555;box-sizing:border-box"></div><svg style="left:1677px;top:891.5px;" width="15" height="9" viewBox="0 0 15 9"><path d="M0 4.500C3 .300 12 .300 15 4.500 12 8.700 3 8.700 0 4.500z" fill="#e4e4e4"/><circle cx="7.500" cy="4.500" r="2.500" fill="#6c6c6c"/><circle cx="8.300" cy="3.600" r=".900" fill="#e4e4e4"/></svg><div class="a" style="left:1697px;top:885px;width:33px;height:21px;background:#fff;border:2px solid #3a3a3a;box-sizing:border-box"></div><span class="t" style="font-size:4.8px;top:890.2px;left:1701.5px;font-weight:bold;color:#000;">PRETTIGE</span><span class="t" style="font-size:4.8px;top:896.2px;left:1701.1px;font-weight:bold;color:#000;">FEESTEN!</span><span class="t" style="font-size:12px;top:888.7px;letter-spacing:-1.09px;left:1733.0px;color:#f0f0f0;">Green</span><span class="t" style="font-size:11.5px;top:889.0px;letter-spacing:-1.02px;left:1878.5px;color:#f0f0f0;font-family:'Liberation Sans','DejaVu Sans',sans-serif;">⌘4</span><div class="a" style="left:1672px;top:908px;width:231px;height:24px;background:#6c6c6c;border-bottom:1px solid #555;box-sizing:border-box"></div><svg style="left:1677px;top:915.5px;" width="15" height="9" viewBox="0 0 15 9"><path d="M0 4.500C3 .300 12 .300 15 4.500 12 8.700 3 8.700 0 4.500z" fill="#e4e4e4"/><circle cx="7.500" cy="4.500" r="2.500" fill="#6c6c6c"/><circle cx="8.300" cy="3.600" r=".900" fill="#e4e4e4"/></svg><div class="a" style="left:1697px;top:909px;width:33px;height:21px;background:#fff;border:2px solid #3a3a3a;box-sizing:border-box"></div><span class="t" style="font-size:4.8px;top:914.2px;left:1701.5px;font-weight:bold;color:#000;">PRETTIGE</span><span class="t" style="font-size:4.8px;top:920.2px;left:1701.1px;font-weight:bold;color:#000;">FEESTEN!</span><span class="t" style="font-size:12px;top:912.7px;letter-spacing:-1.01px;left:1733.0px;color:#f0f0f0;">Blue</span><span class="t" style="font-size:11.5px;top:913.0px;letter-spacing:-1.02px;left:1878.5px;color:#f0f0f0;font-family:'Liberation Sans','DejaVu Sans',sans-serif;">⌘5</span><div class="a" style="left:1903px;top:836px;width:17px;height:211px;background:#4a4a4a"></div><div class="a" style="left:1672px;top:1047px;width:248px;height:1px;background:#444"></div><svg style="left:1789px;top:1052px;" width="12" height="12" viewBox="0 0 12 12"><circle cx="6" cy="6" r="5.300" fill="none" stroke="#d2d2d2" stroke-width="1.200" stroke-dasharray="1.800 1.500"/></svg><svg style="left:1817px;top:1053px;" width="13" height="10" viewBox="0 0 13 10"><rect width="13" height="10" rx="1" fill="#8a8a8a"/><circle cx="6.500" cy="5" r="2.800" fill="#535353"/></svg><svg style="left:1850px;top:1052px;" width="12" height="12" viewBox="0 0 12 12"><rect x=".600" y=".600" width="10.800" height="10.800" fill="none" stroke="#d2d2d2" stroke-width="1.200"/><path d="M6 3v6M3 6h6" stroke="#d2d2d2" stroke-width="1.200"/></svg><svg style="left:1879px;top:1051px;" width="11" height="14" viewBox="0 0 11 14"><path d="M0 2.500h11M3.500 2.500V.700h4v1.800" fill="none" stroke="#8a8a8a" stroke-width="1.100"/><path d="M1.200 4h8.600l-.600 9.300H1.800z" fill="none" stroke="#8a8a8a" stroke-width="1.100"/><path d="M4 5.500v6.500M5.500 5.500v6.500M7 5.500v6.500" stroke="#8a8a8a" stroke-width=".800"/></svg><div class="a" style="left:1672px;top:1071px;width:248px;height:2px;background:#383838"></div><div class="a" style="left:1786px;top:1074px;width:19px;height:3px;background:repeating-linear-gradient(90deg,#454545 0 1px,transparent 1px 2px)"></div>
<div class="a" style="left:1010px;top:958px;width:227px;height:119px;background:#232323;border:1px solid #303030;box-sizing:border-box"></div><div class="a" style="left:1011px;top:983px;width:217px;height:71px;background:#1c1c1c"></div><div class="a" style="left:1011px;top:983px;width:4.5px;height:71px;background:#e0a11a"></div><div class="a" style="left:1228px;top:983px;width:8px;height:94px;background:#262626"></div><div class="a" style="left:1229.5px;top:984px;width:5.5px;height:96px;background:#424242;border-radius:2.700px"></div><svg style="left:1030px;top:1008px;" width="19" height="19" viewBox="0 0 19 19"><path d="M1 8l8-5.500L17 8v10H1z" fill="#e9edf2"/><path d="M1 8l8 5.500L17 8" fill="none" stroke="#b9c2cc" stroke-width="1"/><path d="M1 18l6.500-6M17 18l-6.500-6" stroke="#c5ccd4" stroke-width=".800"/><circle cx="15.500" cy="3.500" r="3" fill="#e3a422"/></svg><span class="t" style="font-size:10.8px;top:993.3px;letter-spacing:-0.55px;left:1062.0px;color:#cf982c;">Have you explored all of the</span><span class="t" style="font-size:10.8px;top:1005.3px;letter-spacing:-0.49px;left:1062.0px;color:#cf982c;">exciting new features packed into</span><span class="t" style="font-size:10.8px;top:1017.3px;letter-spacing:-0.52px;left:1062.0px;color:#cf982c;">Nik 7?</span><span class="t" style="font-size:9.5px;top:1034.2px;letter-spacing:-0.36px;left:1064.0px;color:#9a9a9a;">Click Here &gt;</span><svg style="left:1220px;top:1014px;" width="7" height="7" viewBox="0 0 7 7"><path d="M.500.500l6 6M6.500.500l-6 6" stroke="#e0e0e0" stroke-width="1"/></svg><div class="a" style="left:1011px;top:1054px;width:209px;height:23px;background:#353535"></div><div class="a" style="left:1220px;top:1054px;width:9px;height:23px;background:#2b2b2b"></div><svg style="left:1024px;top:1060px;" width="22" height="17" viewBox="0 0 22 17"><path d="M2 16c2-4 3-9 7-12 2-1.500 4-2 5-1 1 .500 1 2 2 2.500 1.500.500 3 0 4 1.500s0 3-1 4.500c1 1 1.500 3 0 4.500z" fill="#6d8fce"/><path d="M6 16c1-3 3-6 6-7M12 6l2 3M15 9l3 1" stroke="#9db7e6" stroke-width="1" fill="none"/></svg><span class="t" style="font-size:12.5px;top:1062.5px;letter-spacing:0.04px;left:1054.0px;font-weight:bold;color:#fff;">Nik 7 Dfine</span><svg style="left:1221px;top:1071px;" width="7" height="4" viewBox="0 0 7 4"><path d="M.500.500l3 3 3-3" fill="none" stroke="#ccc" stroke-width="1"/></svg><div class="a" style="left:717px;top:951px;width:506px;height:32px;background:#4f4f4f;border:1px solid #5c5c5c;border-radius:5px;box-sizing:border-box;box-shadow:0 2px 5px rgba(0,0,0,.5)"></div><div class="a" style="left:722px;top:956px;width:5px;height:22px;background:repeating-linear-gradient(#f0f0f0 0 2px,transparent 2px 4px)"></div><div class="a" style="left:737px;top:955.5px;width:106px;height:23px;border:1px solid #6b6b6b;border-radius:3px;box-sizing:border-box;background:#4a4a4a"></div><span class="t" style="font-size:11.5px;top:961.5px;letter-spacing:-0.35px;left:766.5px;color:#f2f2f2;">Select subject</span><div class="a" style="left:849px;top:955.5px;width:140px;height:23px;border:1px solid #6b6b6b;border-radius:3px;box-sizing:border-box;background:#4a4a4a"></div><span class="t" style="font-size:11.5px;top:961.5px;letter-spacing:-0.35px;left:879.0px;color:#f2f2f2;">Remove background</span><div class="a" style="left:996px;top:955.5px;width:102px;height:23px;border:1px solid #6b6b6b;border-radius:3px;box-sizing:border-box;background:#4a4a4a"></div><span class="t" style="font-size:11.5px;top:961.5px;letter-spacing:-0.28px;left:1025.5px;color:#f2f2f2;">Adjust colors</span><svg style="left:744px;top:960px;" width="16" height="14" viewBox="0 0 16 14"><circle cx="8" cy="4.500" r="3" fill="#e6e6e6"/><path d="M2.500 13c0-3 2.500-5 5.500-5s5.500 2 5.500 5z" fill="#e6e6e6"/><path d="M1 13.500A8 8 0 0 1 3.500 3M15 13.500A8 8 0 0 0 12.500 3M5 1.500A7 7 0 0 1 11 1.500" fill="none" stroke="#e6e6e6" stroke-width=".900" stroke-dasharray="1.200 1.200"/></svg><svg style="left:857px;top:961px;" width="15" height="11" viewBox="0 0 15 11"><rect x=".500" y=".500" width="14" height="10" fill="#e6e6e6" stroke="#e6e6e6" stroke-width="1"/><path d="M1 1h3v2.500H1zM7 1h3v2.500H7zM4 3.500h3V6H4zM10 3.500h3V6h-3z" fill="#4a4a4a"/><path d="M1 10l4-4.500 3 3 2-2 4 3.500z" fill="#4a4a4a"/></svg><svg style="left:1004px;top:960px;" width="16" height="14" viewBox="0 0 16 14"><circle cx="3.500" cy="3.500" r="3.200" fill="#e6e6e6"/><circle cx="12" cy="3.500" r="3.200" fill="#e6e6e6"/><path d="M0 11h16" stroke="#e6e6e6" stroke-width="1.200"/><circle cx="5" cy="11" r="2" fill="#4a4a4a" stroke="#e6e6e6" stroke-width="1.200"/></svg><svg style="left:1108px;top:960px;" width="17" height="15" viewBox="0 0 17 15"><path d="M3.500 2.500L13 4.500l1.500 8-12 .500z" fill="none" stroke="#8a8a8a" stroke-width="1.200"/><circle cx="3.500" cy="2.500" r="1.500" fill="#8a8a8a"/><circle cx="13" cy="4.500" r="1.500" fill="#8a8a8a"/><circle cx="14.500" cy="12.500" r="1.500" fill="#8a8a8a"/><circle cx="2.500" cy="13" r="1.500" fill="#8a8a8a"/></svg><svg style="left:1140px;top:961px;" width="13" height="13" viewBox="0 0 13 13"><circle cx="6.500" cy="6.500" r="5.800" fill="none" stroke="#e6e6e6" stroke-width="1.200"/><path d="M2.400 10.600A5.800 5.800 0 0 0 10.600 2.400z" fill="#e6e6e6"/></svg><svg style="left:1168px;top:959px;" width="17" height="16" viewBox="0 0 17 16"><path d="M2.500 5.500L8 1l5.500 4.500M10 1h4v4" fill="none" stroke="#e6e6e6" stroke-width="1"/><path d="M.600 14V6.500h7l-1.500 3 1 4.500z" fill="#e6e6e6"/><path d="M1.500 12l2-2.800 1.500 1.500" fill="none" stroke="#4f4f4f" stroke-width="1"/><circle cx="11.300" cy="10.800" r="4.400" fill="#e6e6e6" stroke="#4f4f4f" stroke-width=".800"/><path d="M11.300 8.300v5M8.800 10.800h5" stroke="#4f4f4f" stroke-width="1.300"/></svg><svg style="left:1199px;top:965.5px;" width="15" height="4" viewBox="0 0 15 4"><circle cx="2" cy="2" r="1.600" fill="#e6e6e6"/><circle cx="7.500" cy="2" r="1.600" fill="#e6e6e6"/><circle cx="13" cy="2" r="1.600" fill="#e6e6e6"/></svg>
<div class="a" style="left:36px;top:882px;width:200px;height:59px;background:#535353;border:1px solid #3d3d3d;box-sizing:border-box;box-shadow:1px 2px 4px rgba(0,0,0,.5)"></div><div class="a" style="left:43px;top:888.5px;width:4px;height:4px;background:#f0f0f0"></div><div class="a" style="left:44px;top:921px;width:187px;height:20px;background:#8b7447"></div><div class="a" style="left:44px;top:941px;width:187px;height:6px;background:#6a4f25"></div><svg style="left:57px;top:885px;" width="17" height="16" viewBox="0 0 17 16"><path d="M2.500 5.500L8 1l5.500 4.500M10 1h4v4" fill="none" stroke="#e2e2e2" stroke-width="1"/><path d="M.600 14V6.500h7l-1.500 3 1 4.500z" fill="#e2e2e2"/><path d="M1.500 12l2-2.800 1.500 1.500" fill="none" stroke="#535353" stroke-width="1"/><circle cx="11.300" cy="10.800" r="4.400" fill="#e2e2e2" stroke="#535353" stroke-width=".800"/><path d="M11.300 8.300v5M8.800 10.800h5" stroke="#535353" stroke-width="1.300"/></svg><span class="t" style="font-size:11px;top:887.2px;letter-spacing:-0.07px;left:77.0px;color:#f0f0f0;">Add from device</span><svg style="left:58px;top:904px;" width="16" height="16" viewBox="0 0 16 16"><path d="M.600 9V.600h12.400V6" fill="none" stroke="#e2e2e2" stroke-width="1.200"/><circle cx="9" cy="3.300" r="1" fill="#e2e2e2"/><path d="M.600 10V5.500l2.200-2 2.800 3V10z" fill="#e2e2e2"/><rect x="5.800" y="6.400" width="9.400" height="8.800" rx="1.600" fill="#e2e2e2"/></svg><span class="t" style="font-size:6.8px;top:911.5px;left:65.3px;font-weight:bold;color:#4a4a4a;">St</span><span class="t" style="font-size:11px;top:906.2px;letter-spacing:-0.09px;left:77.0px;color:#f0f0f0;">Add free Adobe Stock images</span><svg style="left:57px;top:922px;" width="17" height="16" viewBox="0 0 17 16"><path d="M3 9A5 5 0 0 1 8 3" fill="none" stroke="#f3e2b8" stroke-width="1.100"/><path d="M1 7.500l2 2.500 2-2.500" fill="none" stroke="#f3e2b8" stroke-width="1.100"/><path d="M13 0l.900 2.100 2.100.900-2.100.900-.900 2.100-.900-2.100-2.100-.900 2.100-.900zM9 3l.500 1.200 1.200.500-1.200.500L9 6.400l-.500-1.200-1.200-.500 1.200-.500z" fill="#f3e2b8"/><rect x="6.600" y="8.600" width="9" height="6.800" fill="none" stroke="#f3e2b8" stroke-width="1.100"/><path d="M7 15l3-3.500 2 2 1.500-1 2 2.500z" fill="#f3e2b8"/></svg><span class="t" style="font-size:11px;top:925.2px;letter-spacing:-0.22px;left:77.0px;color:#f3e2b8;">Generate image</span><svg style="left:30px;top:670px;" width="165" height="215" viewBox="0 0 165 215"><g filter="url(#ash)"><path d="M10.500 203.800L16.400 171.800 20.100 182.400 147.200 6.050 154.800 11.550 27.800 187.900 39 188.100z" fill="#fdb833"/></g><defs><filter id="ash" x="-10%" y="-10%" width="130%" height="130%"><feDropShadow dx="1" dy="2" stdDeviation="1.500" flood-color="#000" flood-opacity=".500"/></filter></defs></svg><div class="a" style="left:251.5px;top:917px;width:40px;height:40px;background:#fdb833;border-radius:50%;box-shadow:0 2px 3px rgba(0,0,0,.5)"></div><span class="t" style="font-size:28px;top:923.0px;left:263.7px;color:#fff;-webkit-text-stroke:.600px #fff;">1</span><div class="a" style="left:468.5px;top:200px;width:40px;height:40px;background:#fdb833;border-radius:50%;box-shadow:0 2px 3px rgba(0,0,0,.5)"></div><span class="t" style="font-size:28px;top:206.0px;left:480.7px;color:#fff;-webkit-text-stroke:.600px #fff;">2</span><div class="a" style="left:460px;top:659.5px;width:40px;height:40px;background:#fdb833;border-radius:50%;box-shadow:0 2px 3px rgba(0,0,0,.5)"></div><span class="t" style="font-size:28px;top:665.5px;left:472.2px;color:#fff;-webkit-text-stroke:.600px #fff;">3</span><div class="a" style="left:904px;top:329px;width:40px;height:40px;background:#fdb833;border-radius:50%;box-shadow:0 2px 3px rgba(0,0,0,.5)"></div><span class="t" style="font-size:28px;top:335.0px;left:916.2px;color:#fff;-webkit-text-stroke:.600px #fff;">4</span>
</div>
</body>
</html>
